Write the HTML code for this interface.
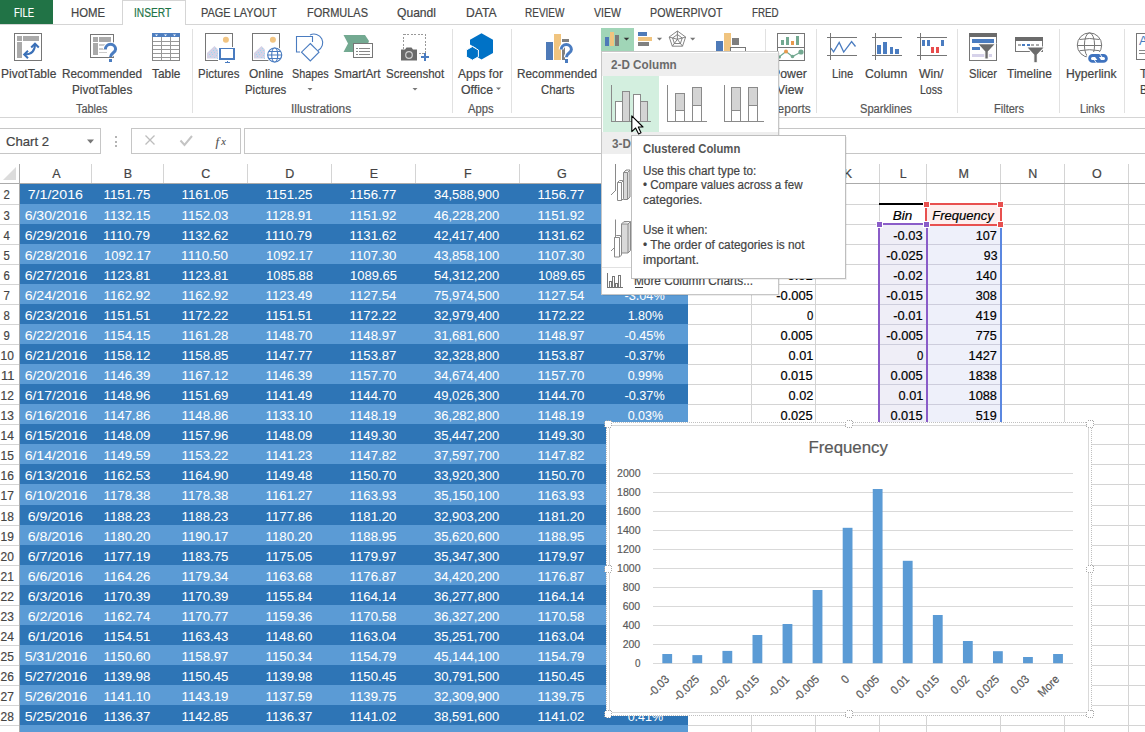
<!DOCTYPE html>
<html><head><meta charset="utf-8"><title>Excel</title>
<style>
html,body{margin:0;padding:0;background:#fff;}
body{width:1145px;height:732px;overflow:hidden;position:relative;font-family:"Liberation Sans", sans-serif;}
.t{position:absolute;white-space:pre;-webkit-text-stroke:0.2px currentColor;}
svg{overflow:visible}
</style></head><body>
<div style="position:absolute;left:0px;top:0px;width:53px;height:25px;background:#217346;"></div>
<div style="position:absolute;left:0px;top:24px;width:1145px;height:1px;background:#d5d5d5;"></div>
<div style="position:absolute;left:122px;top:0px;width:64px;height:25px;background:#ffffff;"></div>
<div style="position:absolute;left:122px;top:0px;width:1px;height:25px;background:#d5d5d5;"></div>
<div style="position:absolute;left:185px;top:0px;width:1px;height:25px;background:#d5d5d5;"></div>
<div style="position:absolute;left:122px;top:0px;width:64px;height:1px;background:#d5d5d5;"></div>
<div class="t" style="left:13.60px;top:6.00px;font-size:13px;line-height:13px;color:#ffffff;transform:scaleX(0.7317);transform-origin:left top;">FILE</div>
<div class="t" style="left:70.70px;top:6.00px;font-size:13px;line-height:13px;color:#444444;transform:scaleX(0.8744);transform-origin:left top;">HOME</div>
<div class="t" style="left:134.10px;top:6.00px;font-size:13px;line-height:13px;color:#217346;transform:scaleX(0.7821);transform-origin:left top;">INSERT</div>
<div class="t" style="left:201.40px;top:6.00px;font-size:13px;line-height:13px;color:#444444;transform:scaleX(0.8416);transform-origin:left top;">PAGE LAYOUT</div>
<div class="t" style="left:307.00px;top:6.00px;font-size:13px;line-height:13px;color:#444444;transform:scaleX(0.8445);transform-origin:left top;">FORMULAS</div>
<div class="t" style="left:397.00px;top:6.00px;font-size:13px;line-height:13px;color:#444444;transform:scaleX(0.9303);transform-origin:left top;">Quandl</div>
<div class="t" style="left:465.60px;top:6.00px;font-size:13px;line-height:13px;color:#444444;transform:scaleX(0.9313);transform-origin:left top;">DATA</div>
<div class="t" style="left:525.00px;top:6.00px;font-size:13px;line-height:13px;color:#444444;transform:scaleX(0.7700);transform-origin:left top;">REVIEW</div>
<div class="t" style="left:594.00px;top:6.00px;font-size:13px;line-height:13px;color:#444444;transform:scaleX(0.8124);transform-origin:left top;">VIEW</div>
<div class="t" style="left:650.00px;top:6.00px;font-size:13px;line-height:13px;color:#444444;transform:scaleX(0.8227);transform-origin:left top;">POWERPIVOT</div>
<div class="t" style="left:752.00px;top:6.00px;font-size:13px;line-height:13px;color:#444444;transform:scaleX(0.7516);transform-origin:left top;">FRED</div>
<div style="position:absolute;left:0px;top:117px;width:1145px;height:1px;background:#d5d5d5;"></div>
<div style="position:absolute;left:192px;top:29px;width:1px;height:84px;background:#e1e1e1;"></div>
<div style="position:absolute;left:452px;top:29px;width:1px;height:84px;background:#e1e1e1;"></div>
<div style="position:absolute;left:511px;top:29px;width:1px;height:84px;background:#e1e1e1;"></div>
<div style="position:absolute;left:765px;top:29px;width:1px;height:84px;background:#e1e1e1;"></div>
<div style="position:absolute;left:816px;top:29px;width:1px;height:84px;background:#e1e1e1;"></div>
<div style="position:absolute;left:957px;top:29px;width:1px;height:84px;background:#e1e1e1;"></div>
<div style="position:absolute;left:1059px;top:29px;width:1px;height:84px;background:#e1e1e1;"></div>
<div style="position:absolute;left:1124px;top:29px;width:1px;height:84px;background:#e1e1e1;"></div>
<div class="t" style="left:0.80px;top:66.70px;font-size:13px;line-height:13px;color:#444444;transform:scaleX(0.9219);transform-origin:left top;">PivotTable</div>
<div class="t" style="left:61.50px;top:66.70px;font-size:13px;line-height:13px;color:#444444;transform:scaleX(0.9075);transform-origin:left top;">Recommended</div>
<div class="t" style="left:71.60px;top:82.50px;font-size:13px;line-height:13px;color:#444444;transform:scaleX(0.9070);transform-origin:left top;">PivotTables</div>
<div class="t" style="left:151.60px;top:66.70px;font-size:13px;line-height:13px;color:#444444;transform:scaleX(0.9138);transform-origin:left top;">Table</div>
<div class="t" style="left:76.00px;top:102.94px;font-size:12px;line-height:12px;color:#555555;transform:scaleX(0.9052);transform-origin:left top;">Tables</div>
<div class="t" style="left:198.00px;top:66.70px;font-size:13px;line-height:13px;color:#444444;transform:scaleX(0.8836);transform-origin:left top;">Pictures</div>
<div class="t" style="left:249.40px;top:66.70px;font-size:13px;line-height:13px;color:#444444;transform:scaleX(0.9181);transform-origin:left top;">Online</div>
<div class="t" style="left:245.40px;top:82.50px;font-size:13px;line-height:13px;color:#444444;transform:scaleX(0.8793);transform-origin:left top;">Pictures</div>
<div class="t" style="left:292.00px;top:66.70px;font-size:13px;line-height:13px;color:#444444;transform:scaleX(0.8323);transform-origin:left top;">Shapes</div>
<div class="t" style="left:334.00px;top:66.70px;font-size:13px;line-height:13px;color:#444444;transform:scaleX(0.9084);transform-origin:left top;">SmartArt</div>
<div class="t" style="left:385.80px;top:66.70px;font-size:13px;line-height:13px;color:#444444;transform:scaleX(0.8850);transform-origin:left top;">Screenshot</div>
<div class="t" style="left:291.40px;top:102.94px;font-size:12px;line-height:12px;color:#555555;transform:scaleX(0.9917);transform-origin:left top;">Illustrations</div>
<div class="t" style="left:458.00px;top:66.70px;font-size:13px;line-height:13px;color:#444444;transform:scaleX(0.9273);transform-origin:left top;">Apps for</div>
<div class="t" style="left:461.30px;top:82.50px;font-size:13px;line-height:13px;color:#444444;transform:scaleX(0.9490);transform-origin:left top;">Office</div>
<div class="t" style="left:468.00px;top:102.94px;font-size:12px;line-height:12px;color:#555555;transform:scaleX(0.9357);transform-origin:left top;">Apps</div>
<div class="t" style="left:517.20px;top:66.70px;font-size:13px;line-height:13px;color:#444444;transform:scaleX(0.9075);transform-origin:left top;">Recommended</div>
<div class="t" style="left:541.30px;top:82.50px;font-size:13px;line-height:13px;color:#444444;transform:scaleX(0.8747);transform-origin:left top;">Charts</div>
<div class="t" style="left:772.00px;top:66.70px;font-size:13px;line-height:13px;color:#444444;transform:scaleX(0.9441);transform-origin:left top;">Power</div>
<div class="t" style="left:776.50px;top:82.50px;font-size:13px;line-height:13px;color:#444444;transform:scaleX(0.9409);transform-origin:left top;">View</div>
<div class="t" style="left:768.50px;top:102.94px;font-size:12px;line-height:12px;color:#555555;transform:scaleX(0.9945);transform-origin:left top;">Reports</div>
<div class="t" style="left:831.60px;top:66.70px;font-size:13px;line-height:13px;color:#444444;transform:scaleX(0.8666);transform-origin:left top;">Line</div>
<div class="t" style="left:865.30px;top:66.70px;font-size:13px;line-height:13px;color:#444444;transform:scaleX(0.9443);transform-origin:left top;">Column</div>
<div class="t" style="left:919.30px;top:66.70px;font-size:13px;line-height:13px;color:#444444;transform:scaleX(0.9423);transform-origin:left top;">Win/</div>
<div class="t" style="left:920.30px;top:82.50px;font-size:13px;line-height:13px;color:#444444;transform:scaleX(0.8082);transform-origin:left top;">Loss</div>
<div class="t" style="left:860.40px;top:102.94px;font-size:12px;line-height:12px;color:#555555;transform:scaleX(0.9263);transform-origin:left top;">Sparklines</div>
<div class="t" style="left:969.00px;top:66.70px;font-size:13px;line-height:13px;color:#444444;transform:scaleX(0.8611);transform-origin:left top;">Slicer</div>
<div class="t" style="left:1007.00px;top:66.70px;font-size:13px;line-height:13px;color:#444444;transform:scaleX(0.9228);transform-origin:left top;">Timeline</div>
<div class="t" style="left:993.60px;top:102.94px;font-size:12px;line-height:12px;color:#555555;transform:scaleX(0.9182);transform-origin:left top;">Filters</div>
<div class="t" style="left:1066.40px;top:66.70px;font-size:13px;line-height:13px;color:#444444;transform:scaleX(0.9338);transform-origin:left top;">Hyperlink</div>
<div class="t" style="left:1079.50px;top:102.94px;font-size:12px;line-height:12px;color:#555555;transform:scaleX(0.8852);transform-origin:left top;">Links</div>
<div class="t" style="left:1139.50px;top:66.70px;font-size:13px;line-height:13px;color:#444444;transform:scaleX(0.9430);transform-origin:left top;">T</div>
<div class="t" style="left:1139.50px;top:82.50px;font-size:13px;line-height:13px;color:#444444;transform:scaleX(0.8649);transform-origin:left top;">B</div>
<svg style="position:absolute;left:0px;top:0px;" width="1145" height="732" viewBox="0 0 1145 732" shape-rendering="crispEdges"><path d="M307.5 88.0h5.0l-2.5 2.5z" fill="#777" shape-rendering="geometricPrecision"/><path d="M412.5 88.0h5.0l-2.5 2.5z" fill="#777" shape-rendering="geometricPrecision"/><path d="M496.0 87.5h5.0l-2.5 2.5z" fill="#777" shape-rendering="geometricPrecision"/><rect x="14.5" y="33.5" width="27" height="27" fill="#fff" stroke="#767676" stroke-width="1.2"/><rect x="17" y="36" width="5" height="5" fill="#aaa"/><rect x="23" y="36" width="16" height="5" fill="#aaa"/><rect x="17" y="42" width="5" height="16" fill="#aaa"/><path d="M24.5 54.5 C31 54.5 35 51 35 44" fill="none" stroke="#3a70b8" stroke-width="2" shape-rendering="geometricPrecision"/><path d="M28 50.8 L24.2 54.5 L28 58.2 M31.2 47.5 L35 43.7 L38.8 47.5" fill="none" stroke="#3a70b8" stroke-width="2" shape-rendering="geometricPrecision"/><rect x="90.5" y="34.5" width="23" height="23" fill="#fff" stroke="#767676"/><rect x="93" y="37" width="4.5" height="4.5" fill="#aaa"/><rect x="99" y="37" width="12" height="4.5" fill="#aaa"/><rect x="93" y="43" width="4.5" height="12" fill="#aaa"/><rect x="99" y="44" width="8" height="1.5" fill="#ccc"/><rect x="99" y="48" width="8" height="1.5" fill="#ccc"/><rect x="99" y="51.5" width="8" height="1.5" fill="#ccc"/><path d="M105.4 49.3 A5.1 5.1 0 0 1 115.6 49.3 C115.6 52.8 110.6 52.8 110.6 57" fill="none" stroke="#fff" stroke-width="5" shape-rendering="geometricPrecision"/><path d="M105.4 49.3 A5.1 5.1 0 0 1 115.6 49.3 C115.6 52.8 110.6 52.8 110.6 57" fill="none" stroke="#4a7cc0" stroke-width="3" shape-rendering="geometricPrecision"/><rect x="109.1" y="59" width="3" height="3.3" fill="#4a7cc0"/><rect x="152.5" y="33.5" width="27" height="27" fill="#fff" stroke="#888"/><rect x="152" y="33" width="28" height="4" fill="#4f7fc0"/><rect x="153" y="40.5" width="26" height="1" fill="#999"/><rect x="153" y="44.5" width="26" height="1" fill="#999"/><rect x="153" y="48.5" width="26" height="1" fill="#999"/><rect x="153" y="52.5" width="26" height="1" fill="#999"/><rect x="153" y="56.5" width="26" height="1" fill="#999"/><rect x="161" y="37" width="1" height="23" fill="#999"/><rect x="170" y="37" width="1" height="23" fill="#999"/><path d="M155.0 34.5h3l-1.5 1.8z" fill="#fff" shape-rendering="geometricPrecision"/><path d="M164.0 34.5h3l-1.5 1.8z" fill="#fff" shape-rendering="geometricPrecision"/><path d="M173.0 34.5h3l-1.5 1.8z" fill="#fff" shape-rendering="geometricPrecision"/><rect x="205.5" y="33.5" width="27" height="27" fill="#fff" stroke="#767676"/><circle cx="225.9" cy="39.8" r="3" fill="#f1c482" shape-rendering="geometricPrecision"/><path d="M207 58.5 V53 L214.5 46 L218 49.5 V58.5 z" fill="#d5d2e6" shape-rendering="geometricPrecision"/><rect x="214.5" y="48" width="1" height="1" fill="#9fd9f0"/><rect x="212.5" y="50" width="1" height="1" fill="#9fd9f0"/><rect x="216" y="50" width="1" height="1" fill="#9fd9f0"/><rect x="210.5" y="52" width="1" height="1" fill="#9fd9f0"/><rect x="214" y="52" width="1" height="1" fill="#9fd9f0"/><rect x="217" y="53" width="1" height="1" fill="#9fd9f0"/><rect x="208.5" y="54" width="1" height="1" fill="#9fd9f0"/><rect x="212" y="54" width="1" height="1" fill="#9fd9f0"/><rect x="215.5" y="55" width="1" height="1" fill="#9fd9f0"/><rect x="210" y="56" width="1" height="1" fill="#9fd9f0"/><rect x="213.5" y="57" width="1" height="1" fill="#9fd9f0"/><rect x="217" y="57.5" width="1" height="1" fill="#9fd9f0"/><rect x="218" y="46.5" width="18" height="14.5" fill="#fff"/><rect x="220" y="48.5" width="14" height="10.5" fill="#fff" stroke="#4a7cc0" stroke-width="1.8"/><rect x="224.5" y="61.8" width="5.5" height="1.2" fill="#4a7cc0"/><rect x="226.5" y="61" width="1.5" height="1" fill="#4a7cc0"/><rect x="252.5" y="33.5" width="27" height="27" fill="#fff" stroke="#767676"/><circle cx="272.9" cy="39.8" r="3" fill="#f1c482" shape-rendering="geometricPrecision"/><path d="M254 58.5 V53 L261.5 46 L265 49.5 V58.5 z" fill="#d5d2e6" shape-rendering="geometricPrecision"/><rect x="261.5" y="48" width="1" height="1" fill="#9fd9f0"/><rect x="259.5" y="50" width="1" height="1" fill="#9fd9f0"/><rect x="263" y="50" width="1" height="1" fill="#9fd9f0"/><rect x="257.5" y="52" width="1" height="1" fill="#9fd9f0"/><rect x="261" y="52" width="1" height="1" fill="#9fd9f0"/><rect x="264" y="53" width="1" height="1" fill="#9fd9f0"/><rect x="255.5" y="54" width="1" height="1" fill="#9fd9f0"/><rect x="259" y="54" width="1" height="1" fill="#9fd9f0"/><rect x="262.5" y="55" width="1" height="1" fill="#9fd9f0"/><rect x="257" y="56" width="1" height="1" fill="#9fd9f0"/><rect x="260.5" y="57" width="1" height="1" fill="#9fd9f0"/><rect x="264" y="57.5" width="1" height="1" fill="#9fd9f0"/><circle cx="274.7" cy="55" r="8.5" fill="#fff" shape-rendering="geometricPrecision"/><g fill="#fff" stroke="#4a7cc0" stroke-width="1.2" shape-rendering="geometricPrecision"><circle cx="274.7" cy="55" r="7"/><ellipse cx="274.7" cy="55" rx="3" ry="7"/><path d="M267.7 55h14M268.7 51.5h12M268.7 58.5h12"/></g><g fill="none" stroke="#4a7cc0" stroke-width="1.1" shape-rendering="geometricPrecision"><path d="M300 52 H296.5 V36.5 H312.5 V42"/><path d="M318 50.5 A8.5 8.5 0 1 0 310 35"/><path d="M310.3 43.5 L319 52.2 L310.3 61 L301.5 52.2 z"/></g><path d="M343.5 35 H365 L369 41 L365 52 H343.5 L348 43.5 z" fill="#73a991" shape-rendering="geometricPrecision"/><rect x="353.5" y="43.5" width="19" height="14" fill="#fff" stroke="#767676"/><rect x="356" y="47.5" width="1.5" height="1" fill="#888"/><rect x="359" y="47.5" width="11" height="1" fill="#888"/><rect x="356" y="50.5" width="1.5" height="1" fill="#888"/><rect x="359" y="50.5" width="11" height="1" fill="#888"/><rect x="356" y="53.5" width="1.5" height="1" fill="#888"/><rect x="359" y="53.5" width="11" height="1" fill="#888"/><rect x="403.5" y="34.5" width="22" height="18.5" fill="none" stroke="#999" stroke-dasharray="2 1.5"/><path d="M401 49.5 h4 l1.5 -2 h5 l1.5 2 h4 v11 h-16 z" fill="#6a6a6a" shape-rendering="geometricPrecision"/><circle cx="409" cy="55" r="3.3" fill="#6a6a6a" stroke="#d0d0d0" stroke-width="1.2" shape-rendering="geometricPrecision"/><rect x="421" y="55.8" width="8" height="2" fill="#4a7cc0"/><rect x="424" y="52.8" width="2" height="8" fill="#4a7cc0"/><path d="M481.5 33.2 L493 39.8 V53 L481.5 59.5 L476 56.3 V48 L470 44.5 V39.8 z" fill="#0072c6" shape-rendering="geometricPrecision"/><path d="M472.4 46.5 L478.4 50 V56.8 L472.4 60.2 L466.4 56.8 V50 z" fill="#0072c6" stroke="#fff" stroke-width="1" shape-rendering="geometricPrecision"/><rect x="546" y="42" width="7" height="17.5" fill="#4e7ab8"/><rect x="554" y="34.3" width="7" height="25.2" fill="#f0c47f"/><rect x="562.2" y="39" width="7" height="3" fill="#7f7f7f"/><rect x="562.2" y="47" width="3" height="12.5" fill="#7f7f7f"/><path d="M561.2 49.6 A5.1 5.1 0 0 1 571.4 49.6 C571.4 53.1 566.4 53.1 566.4 57.3" fill="none" stroke="#fff" stroke-width="5" shape-rendering="geometricPrecision"/><path d="M561.2 49.6 A5.1 5.1 0 0 1 571.4 49.6 C571.4 53.1 566.4 53.1 566.4 57.3" fill="none" stroke="#4a7cc0" stroke-width="3" shape-rendering="geometricPrecision"/><rect x="564.9" y="59.3" width="3" height="3.3" fill="#4a7cc0"/><rect x="601" y="28" width="33" height="23" fill="#a0d5b7"/><rect x="605" y="37" width="3.7" height="8.6" fill="#4e7ab8"/><rect x="610.2" y="32" width="3.7" height="13.6" fill="#f0c47f"/><rect x="615" y="35.2" width="3.7" height="10.4" fill="#7a7a7a"/><path d="M623.7 37.8h5.6l-2.8 2.8z" fill="#333" shape-rendering="geometricPrecision"/><rect x="638" y="32.2" width="8.7" height="3.5" fill="#4e7ab8"/><rect x="638" y="37.1" width="13.7" height="3.7" fill="#f0c47f"/><rect x="638" y="42" width="10.8" height="3.6" fill="#808080"/><path d="M656.9 37.8h5.2l-2.6 2.6z" fill="#777" shape-rendering="geometricPrecision"/><g fill="none" stroke="#777" stroke-width="0.9" shape-rendering="geometricPrecision"><path d="M677.4 31 L685.6 37 L682.5 46.2 H672.3 L669.2 37 z"/><path d="M677.4 34.5 L682.2 38 L680.4 43.5 H674.4 L672.6 38 z"/><path d="M677.4 31 V39.3 M685.6 37 L677.4 39.3 M682.5 46.2 L677.4 39.3 M672.3 46.2 L677.4 39.3 M669.2 37 L677.4 39.3"/></g><path d="M690.1 37.8h5.2l-2.6 2.6z" fill="#777" shape-rendering="geometricPrecision"/><rect x="716" y="40.8" width="6.7" height="12" fill="#4e7ab8"/><rect x="724.2" y="33" width="6.5" height="20" fill="#f0c47f"/><rect x="732" y="38.2" width="6.8" height="7" fill="#7f7f7f"/><rect x="730.5" y="47.5" width="15" height="8" fill="#fff" stroke="#767676"/><rect x="777.5" y="33.5" width="27" height="27" fill="#fff" stroke="#767676"/><rect x="778" y="47.3" width="26" height="1" fill="#767676"/><rect x="780.5" y="40" width="3.3" height="5" fill="#73a991"/><rect x="785.5" y="37" width="3.3" height="8" fill="#73a991"/><rect x="790.5" y="40.5" width="3.3" height="4.5" fill="#e8994d"/><rect x="795.5" y="35.8" width="3.3" height="9.2" fill="#73a991"/><path d="M779 57 L786 51.5 L792.5 56.5 L801 52" fill="none" stroke="#73a991" stroke-width="1.2" shape-rendering="geometricPrecision"/><g shape-rendering="geometricPrecision"><circle cx="786" cy="51.5" r="2" fill="#e8994d"/><circle cx="792.5" cy="56.5" r="1.8" fill="#73a991"/><circle cx="801" cy="52" r="2.6" fill="#73a991"/><circle cx="779.5" cy="57" r="1.5" fill="#73a991"/></g><rect x="830" y="33" width="1" height="26.5" fill="#767676"/><rect x="827" y="37" width="30" height="1" fill="#767676"/><rect x="827" y="55" width="30" height="1" fill="#767676"/><path d="M830.9 48.2 L833.6 51.9 L839.2 42.5 L843.7 52.1 L851.6 41.5 L855.5 46.5" fill="none" stroke="#4a7cc0" stroke-width="1.3" shape-rendering="geometricPrecision"/><rect x="875" y="33" width="1" height="26.5" fill="#767676"/><rect x="872" y="37" width="30" height="1" fill="#767676"/><rect x="872" y="55" width="30" height="1" fill="#767676"/><rect x="877" y="45" width="3.8" height="8.5" fill="#4a7cc0"/><rect x="883.3" y="42.2" width="3.8" height="11.3" fill="#4a7cc0"/><rect x="889.5" y="47.2" width="3.6" height="6.3" fill="#4a7cc0"/><rect x="895.4" y="49.2" width="3.6" height="4.3" fill="#4a7cc0"/><rect x="920" y="33" width="1" height="26.5" fill="#767676"/><rect x="917" y="37" width="30" height="1" fill="#767676"/><rect x="917" y="55" width="30" height="1" fill="#767676"/><rect x="922.2" y="39.8" width="2.6" height="5.8" fill="#4a7cc0"/><rect x="927.2" y="39.8" width="2.6" height="5.8" fill="#4a7cc0"/><rect x="931.1" y="46.9" width="2.8" height="5.9" fill="#e84c4c"/><rect x="936" y="46.9" width="2.6" height="5.9" fill="#e84c4c"/><rect x="941.3" y="39.8" width="2.7" height="5.8" fill="#4a7cc0"/><rect x="969.5" y="33.5" width="27" height="27" fill="#fff" stroke="#767676"/><rect x="969" y="33" width="28" height="3.6" fill="#6b6b6b"/><rect x="972" y="39.3" width="22" height="3.2" fill="#4a7cc0"/><rect x="972" y="46.5" width="8" height="3.2" fill="#4a7cc0"/><rect x="972" y="54" width="20" height="3" fill="#d6d2ea"/><path d="M977.5 43.8 H995.6 L988.3 51.8 V59 H984.8 V51.8 z" fill="#6b6b6b" stroke="#fff" stroke-width="1.1" shape-rendering="geometricPrecision"/><rect x="1015.5" y="37.5" width="27" height="14" fill="#fff" stroke="#767676"/><rect x="1015" y="37" width="28" height="3.5" fill="#6b6b6b"/><rect x="1017.5" y="43.5" width="3" height="2" fill="#aaa"/><rect x="1022" y="43.5" width="3" height="2" fill="#4a7cc0"/><rect x="1026.5" y="43.5" width="3" height="2" fill="#4a7cc0"/><rect x="1031" y="43.5" width="3" height="2" fill="#aaa"/><rect x="1035.5" y="43.5" width="3" height="2" fill="#aaa"/><path d="M1026.5 47 H1044.6 L1037.3 55 V62.8 H1033.8 V55 z" fill="#6b6b6b" stroke="#fff" stroke-width="1.1" shape-rendering="geometricPrecision"/><g fill="none" stroke="#767676" stroke-width="1" shape-rendering="geometricPrecision"><circle cx="1089.5" cy="45.1" r="12.2"/><ellipse cx="1089.5" cy="45.1" rx="5.1" ry="12.2"/><path d="M1077.3 45.5 H1101.7 M1079.5 39.5 Q1089.5 37.5 1099.5 39.5 M1079.5 50.7 Q1089.5 48.7 1099.5 50.7"/></g><rect x="1086.5" y="52" width="23" height="12.5" rx="6" fill="#fff" shape-rendering="geometricPrecision"/><g fill="none" stroke="#3f73bf" shape-rendering="geometricPrecision"><rect x="1089.6" y="55.5" width="16.8" height="5.9" rx="2.95" stroke-width="2.8"/><path d="M1096.3 56 L1099.7 60.7" stroke-width="3"/></g><g stroke="#fff" stroke-width="0.9" shape-rendering="geometricPrecision"><path d="M1099.4 53.3 L1102.4 57.6"/><path d="M1093.8 59.2 L1096.8 63.4"/></g><rect x="1136.5" y="33.5" width="20" height="26" fill="#fff" stroke="#767676"/><text x="1139" y="45" font-family="Liberation Sans" font-size="13" fill="#4a7cc0">A</text><rect x="1139" y="50" width="10" height="1" fill="#888"/><rect x="1139" y="53" width="10" height="1" fill="#888"/></svg>
<div style="position:absolute;left:-1px;top:128px;width:100px;height:24px;border:1px solid #c6c6c6;background:#fff"></div>
<div class="t" style="left:6.00px;top:135.00px;font-size:13px;line-height:13px;color:#444444;transform:scaleX(1.0084);transform-origin:left top;">Chart 2</div>
<svg style="position:absolute;left:0px;top:0px;" width="1145" height="732" viewBox="0 0 1145 732" shape-rendering="crispEdges"><path d="M87 139.5h7l-3.5 4z" fill="#777" shape-rendering="geometricPrecision"/><rect x="115" y="136" width="2" height="2" fill="#b4b4b4"/><rect x="115" y="140.5" width="2" height="2" fill="#b4b4b4"/><rect x="115" y="145" width="2" height="2" fill="#b4b4b4"/></svg>
<div style="position:absolute;left:131px;top:128px;width:108px;height:24px;border:1px solid #c6c6c6;background:#fff"></div>
<div style="position:absolute;left:244px;top:128px;width:920px;height:24px;border:1px solid #c6c6c6;background:#fff"></div>
<svg style="position:absolute;left:0px;top:0px;" width="1145" height="732" viewBox="0 0 1145 732" shape-rendering="crispEdges"><path d="M145.5 135.5 L154.5 144.5 M154.5 135.5 L145.5 144.5" stroke="#bdbdbd" stroke-width="1.3" fill="none" shape-rendering="geometricPrecision"/><path d="M180.5 140.5 L184.5 145 L192 136" stroke="#c4c4c4" stroke-width="2" fill="none" shape-rendering="geometricPrecision"/></svg>
<div class="t" style="left:215.50px;top:134.50px;font-size:13px;font-style:italic;line-height:13px;color:#505050;font-family:'Liberation Serif',serif;-webkit-text-stroke:0.1px #505050;">f</div>
<div class="t" style="left:221.20px;top:136.91px;font-size:10.5px;font-style:italic;line-height:10.5px;color:#505050;font-family:'Liberation Serif',serif;-webkit-text-stroke:0.1px #505050;">x</div>
<div style="position:absolute;left:91px;top:164px;width:1px;height:19px;background:#d4d4d4;"></div>
<div style="position:absolute;left:163px;top:164px;width:1px;height:19px;background:#d4d4d4;"></div>
<div style="position:absolute;left:247px;top:164px;width:1px;height:19px;background:#d4d4d4;"></div>
<div style="position:absolute;left:331px;top:164px;width:1px;height:19px;background:#d4d4d4;"></div>
<div style="position:absolute;left:415px;top:164px;width:1px;height:19px;background:#d4d4d4;"></div>
<div style="position:absolute;left:519px;top:164px;width:1px;height:19px;background:#d4d4d4;"></div>
<div style="position:absolute;left:603px;top:164px;width:1px;height:19px;background:#d4d4d4;"></div>
<div style="position:absolute;left:687px;top:164px;width:1px;height:19px;background:#d4d4d4;"></div>
<div style="position:absolute;left:751px;top:164px;width:1px;height:19px;background:#d4d4d4;"></div>
<div style="position:absolute;left:815px;top:164px;width:1px;height:19px;background:#d4d4d4;"></div>
<div style="position:absolute;left:879px;top:164px;width:1px;height:19px;background:#d4d4d4;"></div>
<div style="position:absolute;left:926px;top:164px;width:1px;height:19px;background:#d4d4d4;"></div>
<div style="position:absolute;left:1000px;top:164px;width:1px;height:19px;background:#d4d4d4;"></div>
<div style="position:absolute;left:1064px;top:164px;width:1px;height:19px;background:#d4d4d4;"></div>
<div style="position:absolute;left:1128px;top:164px;width:1px;height:19px;background:#d4d4d4;"></div>
<div style="position:absolute;left:0px;top:183px;width:1145px;height:1px;background:#ababab;"></div>
<div style="position:absolute;left:19px;top:164px;width:1px;height:568px;background:#ababab;"></div>
<svg style="position:absolute;left:0px;top:0px;" width="1145" height="732" viewBox="0 0 1145 732" shape-rendering="crispEdges"><path d="M16 167 V180 H3 z" fill="#dcdcdc" shape-rendering="geometricPrecision"/></svg>
<div class="t" style="left:52.13px;top:168.42px;font-size:12.5px;line-height:12.5px;color:#444444;">A</div>
<div class="t" style="left:123.63px;top:168.42px;font-size:12.5px;line-height:12.5px;color:#444444;">B</div>
<div class="t" style="left:201.28px;top:168.42px;font-size:12.5px;line-height:12.5px;color:#444444;">C</div>
<div class="t" style="left:285.28px;top:168.42px;font-size:12.5px;line-height:12.5px;color:#444444;">D</div>
<div class="t" style="left:369.63px;top:168.42px;font-size:12.5px;line-height:12.5px;color:#444444;">E</div>
<div class="t" style="left:463.98px;top:168.42px;font-size:12.5px;line-height:12.5px;color:#444444;">F</div>
<div class="t" style="left:556.93px;top:168.42px;font-size:12.5px;line-height:12.5px;color:#444444;">G</div>
<div class="t" style="left:843.63px;top:168.42px;font-size:12.5px;line-height:12.5px;color:#444444;">K</div>
<div class="t" style="left:899.82px;top:168.42px;font-size:12.5px;line-height:12.5px;color:#444444;">L</div>
<div class="t" style="left:958.59px;top:168.42px;font-size:12.5px;line-height:12.5px;color:#444444;">M</div>
<div class="t" style="left:1028.28px;top:168.42px;font-size:12.5px;line-height:12.5px;color:#444444;">N</div>
<div class="t" style="left:1091.93px;top:168.42px;font-size:12.5px;line-height:12.5px;color:#444444;">O</div>
<div class="t" style="left:1160.63px;top:168.42px;font-size:12.5px;line-height:12.5px;color:#444444;">P</div>
<div style="position:absolute;left:0px;top:204px;width:19px;height:1px;background:#d4d4d4;"></div>
<div style="position:absolute;left:0px;top:224px;width:19px;height:1px;background:#d4d4d4;"></div>
<div style="position:absolute;left:0px;top:244px;width:19px;height:1px;background:#d4d4d4;"></div>
<div style="position:absolute;left:0px;top:264px;width:19px;height:1px;background:#d4d4d4;"></div>
<div style="position:absolute;left:0px;top:284px;width:19px;height:1px;background:#d4d4d4;"></div>
<div style="position:absolute;left:0px;top:304px;width:19px;height:1px;background:#d4d4d4;"></div>
<div style="position:absolute;left:0px;top:324px;width:19px;height:1px;background:#d4d4d4;"></div>
<div style="position:absolute;left:0px;top:344px;width:19px;height:1px;background:#d4d4d4;"></div>
<div style="position:absolute;left:0px;top:364px;width:19px;height:1px;background:#d4d4d4;"></div>
<div style="position:absolute;left:0px;top:384px;width:19px;height:1px;background:#d4d4d4;"></div>
<div style="position:absolute;left:0px;top:404px;width:19px;height:1px;background:#d4d4d4;"></div>
<div style="position:absolute;left:0px;top:424px;width:19px;height:1px;background:#d4d4d4;"></div>
<div style="position:absolute;left:0px;top:444px;width:19px;height:1px;background:#d4d4d4;"></div>
<div style="position:absolute;left:0px;top:464px;width:19px;height:1px;background:#d4d4d4;"></div>
<div style="position:absolute;left:0px;top:484px;width:19px;height:1px;background:#d4d4d4;"></div>
<div style="position:absolute;left:0px;top:505px;width:19px;height:1px;background:#d4d4d4;"></div>
<div style="position:absolute;left:0px;top:525px;width:19px;height:1px;background:#d4d4d4;"></div>
<div style="position:absolute;left:0px;top:545px;width:19px;height:1px;background:#d4d4d4;"></div>
<div style="position:absolute;left:0px;top:565px;width:19px;height:1px;background:#d4d4d4;"></div>
<div style="position:absolute;left:0px;top:585px;width:19px;height:1px;background:#d4d4d4;"></div>
<div style="position:absolute;left:0px;top:605px;width:19px;height:1px;background:#d4d4d4;"></div>
<div style="position:absolute;left:0px;top:625px;width:19px;height:1px;background:#d4d4d4;"></div>
<div style="position:absolute;left:0px;top:645px;width:19px;height:1px;background:#d4d4d4;"></div>
<div style="position:absolute;left:0px;top:665px;width:19px;height:1px;background:#d4d4d4;"></div>
<div style="position:absolute;left:0px;top:685px;width:19px;height:1px;background:#d4d4d4;"></div>
<div style="position:absolute;left:0px;top:705px;width:19px;height:1px;background:#d4d4d4;"></div>
<div style="position:absolute;left:0px;top:725px;width:19px;height:1px;background:#d4d4d4;"></div>
<div class="t" style="left:2.78px;top:188.00px;font-size:13px;line-height:13px;color:#444444;transform:scaleX(0.8708);transform-origin:center top;">2</div>
<div class="t" style="left:2.78px;top:208.90px;font-size:13px;line-height:13px;color:#444444;transform:scaleX(0.8708);transform-origin:center top;">3</div>
<div class="t" style="left:2.78px;top:228.90px;font-size:13px;line-height:13px;color:#444444;transform:scaleX(0.8708);transform-origin:center top;">4</div>
<div class="t" style="left:2.78px;top:248.90px;font-size:13px;line-height:13px;color:#444444;transform:scaleX(0.8708);transform-origin:center top;">5</div>
<div class="t" style="left:2.78px;top:268.90px;font-size:13px;line-height:13px;color:#444444;transform:scaleX(0.8708);transform-origin:center top;">6</div>
<div class="t" style="left:2.78px;top:288.90px;font-size:13px;line-height:13px;color:#444444;transform:scaleX(0.8708);transform-origin:center top;">7</div>
<div class="t" style="left:2.78px;top:308.90px;font-size:13px;line-height:13px;color:#444444;transform:scaleX(0.8708);transform-origin:center top;">8</div>
<div class="t" style="left:2.78px;top:328.90px;font-size:13px;line-height:13px;color:#444444;transform:scaleX(0.8708);transform-origin:center top;">9</div>
<div class="t" style="left:0.07px;top:348.90px;font-size:13px;line-height:13px;color:#444444;transform:scaleX(0.9192);transform-origin:center top;">10</div>
<div class="t" style="left:0.55px;top:368.90px;font-size:13px;line-height:13px;color:#444444;transform:scaleX(0.9852);transform-origin:center top;">11</div>
<div class="t" style="left:0.07px;top:388.90px;font-size:13px;line-height:13px;color:#444444;transform:scaleX(0.9192);transform-origin:center top;">12</div>
<div class="t" style="left:0.07px;top:408.90px;font-size:13px;line-height:13px;color:#444444;transform:scaleX(0.9192);transform-origin:center top;">13</div>
<div class="t" style="left:0.07px;top:428.90px;font-size:13px;line-height:13px;color:#444444;transform:scaleX(0.9192);transform-origin:center top;">14</div>
<div class="t" style="left:0.07px;top:448.90px;font-size:13px;line-height:13px;color:#444444;transform:scaleX(0.9192);transform-origin:center top;">15</div>
<div class="t" style="left:0.07px;top:468.90px;font-size:13px;line-height:13px;color:#444444;transform:scaleX(0.9192);transform-origin:center top;">16</div>
<div class="t" style="left:0.07px;top:488.90px;font-size:13px;line-height:13px;color:#444444;transform:scaleX(0.9192);transform-origin:center top;">17</div>
<div class="t" style="left:0.07px;top:509.90px;font-size:13px;line-height:13px;color:#444444;transform:scaleX(0.9192);transform-origin:center top;">18</div>
<div class="t" style="left:0.07px;top:529.90px;font-size:13px;line-height:13px;color:#444444;transform:scaleX(0.9192);transform-origin:center top;">19</div>
<div class="t" style="left:0.07px;top:549.90px;font-size:13px;line-height:13px;color:#444444;transform:scaleX(0.9192);transform-origin:center top;">20</div>
<div class="t" style="left:0.07px;top:569.90px;font-size:13px;line-height:13px;color:#444444;transform:scaleX(0.9192);transform-origin:center top;">21</div>
<div class="t" style="left:0.07px;top:589.90px;font-size:13px;line-height:13px;color:#444444;transform:scaleX(0.9192);transform-origin:center top;">22</div>
<div class="t" style="left:0.07px;top:609.90px;font-size:13px;line-height:13px;color:#444444;transform:scaleX(0.9192);transform-origin:center top;">23</div>
<div class="t" style="left:0.07px;top:629.90px;font-size:13px;line-height:13px;color:#444444;transform:scaleX(0.9192);transform-origin:center top;">24</div>
<div class="t" style="left:0.07px;top:649.90px;font-size:13px;line-height:13px;color:#444444;transform:scaleX(0.9192);transform-origin:center top;">25</div>
<div class="t" style="left:0.07px;top:669.90px;font-size:13px;line-height:13px;color:#444444;transform:scaleX(0.9192);transform-origin:center top;">26</div>
<div class="t" style="left:0.07px;top:689.90px;font-size:13px;line-height:13px;color:#444444;transform:scaleX(0.9192);transform-origin:center top;">27</div>
<div class="t" style="left:0.07px;top:709.90px;font-size:13px;line-height:13px;color:#444444;transform:scaleX(0.9192);transform-origin:center top;">28</div>
<div style="position:absolute;left:687px;top:184px;width:1px;height:548px;background:#d4d4d4;"></div>
<div style="position:absolute;left:751px;top:184px;width:1px;height:548px;background:#d4d4d4;"></div>
<div style="position:absolute;left:815px;top:184px;width:1px;height:548px;background:#d4d4d4;"></div>
<div style="position:absolute;left:879px;top:184px;width:1px;height:548px;background:#d4d4d4;"></div>
<div style="position:absolute;left:926px;top:184px;width:1px;height:548px;background:#d4d4d4;"></div>
<div style="position:absolute;left:1000px;top:184px;width:1px;height:548px;background:#d4d4d4;"></div>
<div style="position:absolute;left:1064px;top:184px;width:1px;height:548px;background:#d4d4d4;"></div>
<div style="position:absolute;left:1128px;top:184px;width:1px;height:548px;background:#d4d4d4;"></div>
<div style="position:absolute;left:688px;top:204px;width:460px;height:1px;background:#d4d4d4;"></div>
<div style="position:absolute;left:688px;top:224px;width:460px;height:1px;background:#d4d4d4;"></div>
<div style="position:absolute;left:688px;top:244px;width:460px;height:1px;background:#d4d4d4;"></div>
<div style="position:absolute;left:688px;top:264px;width:460px;height:1px;background:#d4d4d4;"></div>
<div style="position:absolute;left:688px;top:284px;width:460px;height:1px;background:#d4d4d4;"></div>
<div style="position:absolute;left:688px;top:304px;width:460px;height:1px;background:#d4d4d4;"></div>
<div style="position:absolute;left:688px;top:324px;width:460px;height:1px;background:#d4d4d4;"></div>
<div style="position:absolute;left:688px;top:344px;width:460px;height:1px;background:#d4d4d4;"></div>
<div style="position:absolute;left:688px;top:364px;width:460px;height:1px;background:#d4d4d4;"></div>
<div style="position:absolute;left:688px;top:384px;width:460px;height:1px;background:#d4d4d4;"></div>
<div style="position:absolute;left:688px;top:404px;width:460px;height:1px;background:#d4d4d4;"></div>
<div style="position:absolute;left:688px;top:424px;width:460px;height:1px;background:#d4d4d4;"></div>
<div style="position:absolute;left:688px;top:444px;width:460px;height:1px;background:#d4d4d4;"></div>
<div style="position:absolute;left:688px;top:464px;width:460px;height:1px;background:#d4d4d4;"></div>
<div style="position:absolute;left:688px;top:484px;width:460px;height:1px;background:#d4d4d4;"></div>
<div style="position:absolute;left:688px;top:505px;width:460px;height:1px;background:#d4d4d4;"></div>
<div style="position:absolute;left:688px;top:525px;width:460px;height:1px;background:#d4d4d4;"></div>
<div style="position:absolute;left:688px;top:545px;width:460px;height:1px;background:#d4d4d4;"></div>
<div style="position:absolute;left:688px;top:565px;width:460px;height:1px;background:#d4d4d4;"></div>
<div style="position:absolute;left:688px;top:585px;width:460px;height:1px;background:#d4d4d4;"></div>
<div style="position:absolute;left:688px;top:605px;width:460px;height:1px;background:#d4d4d4;"></div>
<div style="position:absolute;left:688px;top:625px;width:460px;height:1px;background:#d4d4d4;"></div>
<div style="position:absolute;left:688px;top:645px;width:460px;height:1px;background:#d4d4d4;"></div>
<div style="position:absolute;left:688px;top:665px;width:460px;height:1px;background:#d4d4d4;"></div>
<div style="position:absolute;left:688px;top:685px;width:460px;height:1px;background:#d4d4d4;"></div>
<div style="position:absolute;left:688px;top:705px;width:460px;height:1px;background:#d4d4d4;"></div>
<div style="position:absolute;left:688px;top:725px;width:460px;height:1px;background:#d4d4d4;"></div>
<div style="position:absolute;left:20px;top:184px;width:668px;height:20px;background:#2e75b6;"></div>
<div style="position:absolute;left:20px;top:204px;width:668px;height:20px;background:#5b9bd5;"></div>
<div style="position:absolute;left:20px;top:224px;width:668px;height:20px;background:#2e75b6;"></div>
<div style="position:absolute;left:20px;top:244px;width:668px;height:20px;background:#5b9bd5;"></div>
<div style="position:absolute;left:20px;top:264px;width:668px;height:20px;background:#2e75b6;"></div>
<div style="position:absolute;left:20px;top:284px;width:668px;height:20px;background:#5b9bd5;"></div>
<div style="position:absolute;left:20px;top:304px;width:668px;height:20px;background:#2e75b6;"></div>
<div style="position:absolute;left:20px;top:324px;width:668px;height:20px;background:#5b9bd5;"></div>
<div style="position:absolute;left:20px;top:344px;width:668px;height:20px;background:#2e75b6;"></div>
<div style="position:absolute;left:20px;top:364px;width:668px;height:20px;background:#5b9bd5;"></div>
<div style="position:absolute;left:20px;top:384px;width:668px;height:20px;background:#2e75b6;"></div>
<div style="position:absolute;left:20px;top:404px;width:668px;height:20px;background:#5b9bd5;"></div>
<div style="position:absolute;left:20px;top:424px;width:668px;height:20px;background:#2e75b6;"></div>
<div style="position:absolute;left:20px;top:444px;width:668px;height:20px;background:#5b9bd5;"></div>
<div style="position:absolute;left:20px;top:464px;width:668px;height:20px;background:#2e75b6;"></div>
<div style="position:absolute;left:20px;top:484px;width:668px;height:21px;background:#5b9bd5;"></div>
<div style="position:absolute;left:20px;top:505px;width:668px;height:20px;background:#2e75b6;"></div>
<div style="position:absolute;left:20px;top:525px;width:668px;height:20px;background:#5b9bd5;"></div>
<div style="position:absolute;left:20px;top:545px;width:668px;height:20px;background:#2e75b6;"></div>
<div style="position:absolute;left:20px;top:565px;width:668px;height:20px;background:#5b9bd5;"></div>
<div style="position:absolute;left:20px;top:585px;width:668px;height:20px;background:#2e75b6;"></div>
<div style="position:absolute;left:20px;top:605px;width:668px;height:20px;background:#5b9bd5;"></div>
<div style="position:absolute;left:20px;top:625px;width:668px;height:20px;background:#2e75b6;"></div>
<div style="position:absolute;left:20px;top:645px;width:668px;height:20px;background:#5b9bd5;"></div>
<div style="position:absolute;left:20px;top:665px;width:668px;height:20px;background:#2e75b6;"></div>
<div style="position:absolute;left:20px;top:685px;width:668px;height:20px;background:#5b9bd5;"></div>
<div style="position:absolute;left:20px;top:705px;width:668px;height:20px;background:#2e75b6;"></div>
<div style="position:absolute;left:20px;top:725px;width:668px;height:20px;background:#5b9bd5;"></div>
<div class="t" style="left:30.20px;top:188.10px;font-size:13px;line-height:13px;color:#ffffff;transform:scaleX(1.0913);transform-origin:center top;-webkit-text-stroke:0.05px #fff;">7/1/2016</div>
<div class="t" style="left:103.98px;top:188.10px;font-size:13px;line-height:13px;color:#ffffff;transform:scaleX(1.0174);transform-origin:center top;-webkit-text-stroke:0.05px #fff;">1151.75</div>
<div class="t" style="left:181.98px;top:188.10px;font-size:13px;line-height:13px;color:#ffffff;transform:scaleX(1.0174);transform-origin:center top;-webkit-text-stroke:0.05px #fff;">1161.05</div>
<div class="t" style="left:265.98px;top:188.10px;font-size:13px;line-height:13px;color:#ffffff;transform:scaleX(1.0174);transform-origin:center top;-webkit-text-stroke:0.05px #fff;">1151.25</div>
<div class="t" style="left:349.98px;top:188.10px;font-size:13px;line-height:13px;color:#ffffff;transform:scaleX(1.0174);transform-origin:center top;-webkit-text-stroke:0.05px #fff;">1156.77</div>
<div class="t" style="left:434.46px;top:188.10px;font-size:13px;line-height:13px;color:#ffffff;transform:scaleX(1.0036);transform-origin:center top;-webkit-text-stroke:0.05px #fff;">34,588,900</div>
<div class="t" style="left:537.98px;top:188.10px;font-size:13px;line-height:13px;color:#ffffff;transform:scaleX(1.0174);transform-origin:center top;-webkit-text-stroke:0.05px #fff;">1156.77</div>
<div class="t" style="left:26.58px;top:208.90px;font-size:13px;line-height:13px;color:#ffffff;transform:scaleX(1.0819);transform-origin:center top;-webkit-text-stroke:0.05px #fff;">6/30/2016</div>
<div class="t" style="left:103.98px;top:208.90px;font-size:13px;line-height:13px;color:#ffffff;transform:scaleX(1.0174);transform-origin:center top;-webkit-text-stroke:0.05px #fff;">1132.15</div>
<div class="t" style="left:181.98px;top:208.90px;font-size:13px;line-height:13px;color:#ffffff;transform:scaleX(1.0174);transform-origin:center top;-webkit-text-stroke:0.05px #fff;">1152.03</div>
<div class="t" style="left:265.98px;top:208.90px;font-size:13px;line-height:13px;color:#ffffff;transform:scaleX(1.0174);transform-origin:center top;-webkit-text-stroke:0.05px #fff;">1128.91</div>
<div class="t" style="left:349.98px;top:208.90px;font-size:13px;line-height:13px;color:#ffffff;transform:scaleX(1.0174);transform-origin:center top;-webkit-text-stroke:0.05px #fff;">1151.92</div>
<div class="t" style="left:434.46px;top:208.90px;font-size:13px;line-height:13px;color:#ffffff;transform:scaleX(1.0036);transform-origin:center top;-webkit-text-stroke:0.05px #fff;">46,228,200</div>
<div class="t" style="left:537.98px;top:208.90px;font-size:13px;line-height:13px;color:#ffffff;transform:scaleX(1.0174);transform-origin:center top;-webkit-text-stroke:0.05px #fff;">1151.92</div>
<div class="t" style="left:26.58px;top:228.90px;font-size:13px;line-height:13px;color:#ffffff;transform:scaleX(1.0819);transform-origin:center top;-webkit-text-stroke:0.05px #fff;">6/29/2016</div>
<div class="t" style="left:104.47px;top:228.90px;font-size:13px;line-height:13px;color:#ffffff;transform:scaleX(1.0392);transform-origin:center top;-webkit-text-stroke:0.05px #fff;">1110.79</div>
<div class="t" style="left:181.98px;top:228.90px;font-size:13px;line-height:13px;color:#ffffff;transform:scaleX(1.0174);transform-origin:center top;-webkit-text-stroke:0.05px #fff;">1132.62</div>
<div class="t" style="left:266.47px;top:228.90px;font-size:13px;line-height:13px;color:#ffffff;transform:scaleX(1.0392);transform-origin:center top;-webkit-text-stroke:0.05px #fff;">1110.79</div>
<div class="t" style="left:349.98px;top:228.90px;font-size:13px;line-height:13px;color:#ffffff;transform:scaleX(1.0174);transform-origin:center top;-webkit-text-stroke:0.05px #fff;">1131.62</div>
<div class="t" style="left:434.46px;top:228.90px;font-size:13px;line-height:13px;color:#ffffff;transform:scaleX(1.0036);transform-origin:center top;-webkit-text-stroke:0.05px #fff;">42,417,400</div>
<div class="t" style="left:537.98px;top:228.90px;font-size:13px;line-height:13px;color:#ffffff;transform:scaleX(1.0174);transform-origin:center top;-webkit-text-stroke:0.05px #fff;">1131.62</div>
<div class="t" style="left:26.58px;top:248.90px;font-size:13px;line-height:13px;color:#ffffff;transform:scaleX(1.0819);transform-origin:center top;-webkit-text-stroke:0.05px #fff;">6/28/2016</div>
<div class="t" style="left:103.50px;top:248.90px;font-size:13px;line-height:13px;color:#ffffff;transform:scaleX(0.9964);transform-origin:center top;-webkit-text-stroke:0.05px #fff;">1092.17</div>
<div class="t" style="left:182.47px;top:248.90px;font-size:13px;line-height:13px;color:#ffffff;transform:scaleX(1.0392);transform-origin:center top;-webkit-text-stroke:0.05px #fff;">1110.50</div>
<div class="t" style="left:265.50px;top:248.90px;font-size:13px;line-height:13px;color:#ffffff;transform:scaleX(0.9964);transform-origin:center top;-webkit-text-stroke:0.05px #fff;">1092.17</div>
<div class="t" style="left:349.98px;top:248.90px;font-size:13px;line-height:13px;color:#ffffff;transform:scaleX(1.0174);transform-origin:center top;-webkit-text-stroke:0.05px #fff;">1107.30</div>
<div class="t" style="left:434.46px;top:248.90px;font-size:13px;line-height:13px;color:#ffffff;transform:scaleX(1.0036);transform-origin:center top;-webkit-text-stroke:0.05px #fff;">43,858,100</div>
<div class="t" style="left:537.98px;top:248.90px;font-size:13px;line-height:13px;color:#ffffff;transform:scaleX(1.0174);transform-origin:center top;-webkit-text-stroke:0.05px #fff;">1107.30</div>
<div class="t" style="left:26.58px;top:268.90px;font-size:13px;line-height:13px;color:#ffffff;transform:scaleX(1.0819);transform-origin:center top;-webkit-text-stroke:0.05px #fff;">6/27/2016</div>
<div class="t" style="left:103.98px;top:268.90px;font-size:13px;line-height:13px;color:#ffffff;transform:scaleX(1.0174);transform-origin:center top;-webkit-text-stroke:0.05px #fff;">1123.81</div>
<div class="t" style="left:181.98px;top:268.90px;font-size:13px;line-height:13px;color:#ffffff;transform:scaleX(1.0174);transform-origin:center top;-webkit-text-stroke:0.05px #fff;">1123.81</div>
<div class="t" style="left:265.50px;top:268.90px;font-size:13px;line-height:13px;color:#ffffff;transform:scaleX(0.9964);transform-origin:center top;-webkit-text-stroke:0.05px #fff;">1085.88</div>
<div class="t" style="left:349.50px;top:268.90px;font-size:13px;line-height:13px;color:#ffffff;transform:scaleX(0.9964);transform-origin:center top;-webkit-text-stroke:0.05px #fff;">1089.65</div>
<div class="t" style="left:434.46px;top:268.90px;font-size:13px;line-height:13px;color:#ffffff;transform:scaleX(1.0036);transform-origin:center top;-webkit-text-stroke:0.05px #fff;">54,312,200</div>
<div class="t" style="left:537.50px;top:268.90px;font-size:13px;line-height:13px;color:#ffffff;transform:scaleX(0.9964);transform-origin:center top;-webkit-text-stroke:0.05px #fff;">1089.65</div>
<div class="t" style="left:26.58px;top:288.90px;font-size:13px;line-height:13px;color:#ffffff;transform:scaleX(1.0819);transform-origin:center top;-webkit-text-stroke:0.05px #fff;">6/24/2016</div>
<div class="t" style="left:103.98px;top:288.90px;font-size:13px;line-height:13px;color:#ffffff;transform:scaleX(1.0174);transform-origin:center top;-webkit-text-stroke:0.05px #fff;">1162.92</div>
<div class="t" style="left:181.98px;top:288.90px;font-size:13px;line-height:13px;color:#ffffff;transform:scaleX(1.0174);transform-origin:center top;-webkit-text-stroke:0.05px #fff;">1162.92</div>
<div class="t" style="left:265.98px;top:288.90px;font-size:13px;line-height:13px;color:#ffffff;transform:scaleX(1.0174);transform-origin:center top;-webkit-text-stroke:0.05px #fff;">1123.49</div>
<div class="t" style="left:349.98px;top:288.90px;font-size:13px;line-height:13px;color:#ffffff;transform:scaleX(1.0174);transform-origin:center top;-webkit-text-stroke:0.05px #fff;">1127.54</div>
<div class="t" style="left:434.46px;top:288.90px;font-size:13px;line-height:13px;color:#ffffff;transform:scaleX(1.0036);transform-origin:center top;-webkit-text-stroke:0.05px #fff;">75,974,500</div>
<div class="t" style="left:537.98px;top:288.90px;font-size:13px;line-height:13px;color:#ffffff;transform:scaleX(1.0174);transform-origin:center top;-webkit-text-stroke:0.05px #fff;">1127.54</div>
<div class="t" style="left:624.40px;top:288.90px;font-size:13px;line-height:13px;color:#ffffff;transform:scaleX(0.9760);transform-origin:center top;-webkit-text-stroke:0.05px #fff;">-3.04%</div>
<div class="t" style="left:26.58px;top:308.90px;font-size:13px;line-height:13px;color:#ffffff;transform:scaleX(1.0819);transform-origin:center top;-webkit-text-stroke:0.05px #fff;">6/23/2016</div>
<div class="t" style="left:103.98px;top:308.90px;font-size:13px;line-height:13px;color:#ffffff;transform:scaleX(1.0174);transform-origin:center top;-webkit-text-stroke:0.05px #fff;">1151.51</div>
<div class="t" style="left:181.98px;top:308.90px;font-size:13px;line-height:13px;color:#ffffff;transform:scaleX(1.0174);transform-origin:center top;-webkit-text-stroke:0.05px #fff;">1172.22</div>
<div class="t" style="left:265.98px;top:308.90px;font-size:13px;line-height:13px;color:#ffffff;transform:scaleX(1.0174);transform-origin:center top;-webkit-text-stroke:0.05px #fff;">1151.51</div>
<div class="t" style="left:349.98px;top:308.90px;font-size:13px;line-height:13px;color:#ffffff;transform:scaleX(1.0174);transform-origin:center top;-webkit-text-stroke:0.05px #fff;">1172.22</div>
<div class="t" style="left:434.46px;top:308.90px;font-size:13px;line-height:13px;color:#ffffff;transform:scaleX(1.0036);transform-origin:center top;-webkit-text-stroke:0.05px #fff;">32,979,400</div>
<div class="t" style="left:537.98px;top:308.90px;font-size:13px;line-height:13px;color:#ffffff;transform:scaleX(1.0174);transform-origin:center top;-webkit-text-stroke:0.05px #fff;">1172.22</div>
<div class="t" style="left:626.56px;top:308.90px;font-size:13px;line-height:13px;color:#ffffff;transform:scaleX(0.9653);transform-origin:center top;-webkit-text-stroke:0.05px #fff;">1.80%</div>
<div class="t" style="left:26.58px;top:328.90px;font-size:13px;line-height:13px;color:#ffffff;transform:scaleX(1.0819);transform-origin:center top;-webkit-text-stroke:0.05px #fff;">6/22/2016</div>
<div class="t" style="left:103.98px;top:328.90px;font-size:13px;line-height:13px;color:#ffffff;transform:scaleX(1.0174);transform-origin:center top;-webkit-text-stroke:0.05px #fff;">1154.15</div>
<div class="t" style="left:181.98px;top:328.90px;font-size:13px;line-height:13px;color:#ffffff;transform:scaleX(1.0174);transform-origin:center top;-webkit-text-stroke:0.05px #fff;">1161.28</div>
<div class="t" style="left:265.98px;top:328.90px;font-size:13px;line-height:13px;color:#ffffff;transform:scaleX(1.0174);transform-origin:center top;-webkit-text-stroke:0.05px #fff;">1148.70</div>
<div class="t" style="left:349.98px;top:328.90px;font-size:13px;line-height:13px;color:#ffffff;transform:scaleX(1.0174);transform-origin:center top;-webkit-text-stroke:0.05px #fff;">1148.97</div>
<div class="t" style="left:434.46px;top:328.90px;font-size:13px;line-height:13px;color:#ffffff;transform:scaleX(1.0036);transform-origin:center top;-webkit-text-stroke:0.05px #fff;">31,681,600</div>
<div class="t" style="left:537.98px;top:328.90px;font-size:13px;line-height:13px;color:#ffffff;transform:scaleX(1.0174);transform-origin:center top;-webkit-text-stroke:0.05px #fff;">1148.97</div>
<div class="t" style="left:624.40px;top:328.90px;font-size:13px;line-height:13px;color:#ffffff;transform:scaleX(0.9760);transform-origin:center top;-webkit-text-stroke:0.05px #fff;">-0.45%</div>
<div class="t" style="left:26.58px;top:348.90px;font-size:13px;line-height:13px;color:#ffffff;transform:scaleX(1.0819);transform-origin:center top;-webkit-text-stroke:0.05px #fff;">6/21/2016</div>
<div class="t" style="left:103.98px;top:348.90px;font-size:13px;line-height:13px;color:#ffffff;transform:scaleX(1.0174);transform-origin:center top;-webkit-text-stroke:0.05px #fff;">1158.12</div>
<div class="t" style="left:181.98px;top:348.90px;font-size:13px;line-height:13px;color:#ffffff;transform:scaleX(1.0174);transform-origin:center top;-webkit-text-stroke:0.05px #fff;">1158.85</div>
<div class="t" style="left:265.98px;top:348.90px;font-size:13px;line-height:13px;color:#ffffff;transform:scaleX(1.0174);transform-origin:center top;-webkit-text-stroke:0.05px #fff;">1147.77</div>
<div class="t" style="left:349.98px;top:348.90px;font-size:13px;line-height:13px;color:#ffffff;transform:scaleX(1.0174);transform-origin:center top;-webkit-text-stroke:0.05px #fff;">1153.87</div>
<div class="t" style="left:434.46px;top:348.90px;font-size:13px;line-height:13px;color:#ffffff;transform:scaleX(1.0036);transform-origin:center top;-webkit-text-stroke:0.05px #fff;">32,328,800</div>
<div class="t" style="left:537.98px;top:348.90px;font-size:13px;line-height:13px;color:#ffffff;transform:scaleX(1.0174);transform-origin:center top;-webkit-text-stroke:0.05px #fff;">1153.87</div>
<div class="t" style="left:624.40px;top:348.90px;font-size:13px;line-height:13px;color:#ffffff;transform:scaleX(0.9760);transform-origin:center top;-webkit-text-stroke:0.05px #fff;">-0.37%</div>
<div class="t" style="left:26.58px;top:368.90px;font-size:13px;line-height:13px;color:#ffffff;transform:scaleX(1.0819);transform-origin:center top;-webkit-text-stroke:0.05px #fff;">6/20/2016</div>
<div class="t" style="left:103.98px;top:368.90px;font-size:13px;line-height:13px;color:#ffffff;transform:scaleX(1.0174);transform-origin:center top;-webkit-text-stroke:0.05px #fff;">1146.39</div>
<div class="t" style="left:181.98px;top:368.90px;font-size:13px;line-height:13px;color:#ffffff;transform:scaleX(1.0174);transform-origin:center top;-webkit-text-stroke:0.05px #fff;">1167.12</div>
<div class="t" style="left:265.98px;top:368.90px;font-size:13px;line-height:13px;color:#ffffff;transform:scaleX(1.0174);transform-origin:center top;-webkit-text-stroke:0.05px #fff;">1146.39</div>
<div class="t" style="left:349.98px;top:368.90px;font-size:13px;line-height:13px;color:#ffffff;transform:scaleX(1.0174);transform-origin:center top;-webkit-text-stroke:0.05px #fff;">1157.70</div>
<div class="t" style="left:434.46px;top:368.90px;font-size:13px;line-height:13px;color:#ffffff;transform:scaleX(1.0036);transform-origin:center top;-webkit-text-stroke:0.05px #fff;">34,674,400</div>
<div class="t" style="left:537.98px;top:368.90px;font-size:13px;line-height:13px;color:#ffffff;transform:scaleX(1.0174);transform-origin:center top;-webkit-text-stroke:0.05px #fff;">1157.70</div>
<div class="t" style="left:626.56px;top:368.90px;font-size:13px;line-height:13px;color:#ffffff;transform:scaleX(0.9653);transform-origin:center top;-webkit-text-stroke:0.05px #fff;">0.99%</div>
<div class="t" style="left:26.58px;top:388.90px;font-size:13px;line-height:13px;color:#ffffff;transform:scaleX(1.0819);transform-origin:center top;-webkit-text-stroke:0.05px #fff;">6/17/2016</div>
<div class="t" style="left:103.98px;top:388.90px;font-size:13px;line-height:13px;color:#ffffff;transform:scaleX(1.0174);transform-origin:center top;-webkit-text-stroke:0.05px #fff;">1148.96</div>
<div class="t" style="left:181.98px;top:388.90px;font-size:13px;line-height:13px;color:#ffffff;transform:scaleX(1.0174);transform-origin:center top;-webkit-text-stroke:0.05px #fff;">1151.69</div>
<div class="t" style="left:265.98px;top:388.90px;font-size:13px;line-height:13px;color:#ffffff;transform:scaleX(1.0174);transform-origin:center top;-webkit-text-stroke:0.05px #fff;">1141.49</div>
<div class="t" style="left:349.98px;top:388.90px;font-size:13px;line-height:13px;color:#ffffff;transform:scaleX(1.0174);transform-origin:center top;-webkit-text-stroke:0.05px #fff;">1144.70</div>
<div class="t" style="left:434.46px;top:388.90px;font-size:13px;line-height:13px;color:#ffffff;transform:scaleX(1.0036);transform-origin:center top;-webkit-text-stroke:0.05px #fff;">49,026,300</div>
<div class="t" style="left:537.98px;top:388.90px;font-size:13px;line-height:13px;color:#ffffff;transform:scaleX(1.0174);transform-origin:center top;-webkit-text-stroke:0.05px #fff;">1144.70</div>
<div class="t" style="left:624.40px;top:388.90px;font-size:13px;line-height:13px;color:#ffffff;transform:scaleX(0.9760);transform-origin:center top;-webkit-text-stroke:0.05px #fff;">-0.37%</div>
<div class="t" style="left:26.58px;top:408.90px;font-size:13px;line-height:13px;color:#ffffff;transform:scaleX(1.0819);transform-origin:center top;-webkit-text-stroke:0.05px #fff;">6/16/2016</div>
<div class="t" style="left:103.98px;top:408.90px;font-size:13px;line-height:13px;color:#ffffff;transform:scaleX(1.0174);transform-origin:center top;-webkit-text-stroke:0.05px #fff;">1147.86</div>
<div class="t" style="left:181.98px;top:408.90px;font-size:13px;line-height:13px;color:#ffffff;transform:scaleX(1.0174);transform-origin:center top;-webkit-text-stroke:0.05px #fff;">1148.86</div>
<div class="t" style="left:265.98px;top:408.90px;font-size:13px;line-height:13px;color:#ffffff;transform:scaleX(1.0174);transform-origin:center top;-webkit-text-stroke:0.05px #fff;">1133.10</div>
<div class="t" style="left:349.98px;top:408.90px;font-size:13px;line-height:13px;color:#ffffff;transform:scaleX(1.0174);transform-origin:center top;-webkit-text-stroke:0.05px #fff;">1148.19</div>
<div class="t" style="left:434.46px;top:408.90px;font-size:13px;line-height:13px;color:#ffffff;transform:scaleX(1.0036);transform-origin:center top;-webkit-text-stroke:0.05px #fff;">36,282,800</div>
<div class="t" style="left:537.98px;top:408.90px;font-size:13px;line-height:13px;color:#ffffff;transform:scaleX(1.0174);transform-origin:center top;-webkit-text-stroke:0.05px #fff;">1148.19</div>
<div class="t" style="left:626.56px;top:408.90px;font-size:13px;line-height:13px;color:#ffffff;transform:scaleX(0.9653);transform-origin:center top;-webkit-text-stroke:0.05px #fff;">0.03%</div>
<div class="t" style="left:26.58px;top:428.90px;font-size:13px;line-height:13px;color:#ffffff;transform:scaleX(1.0819);transform-origin:center top;-webkit-text-stroke:0.05px #fff;">6/15/2016</div>
<div class="t" style="left:103.98px;top:428.90px;font-size:13px;line-height:13px;color:#ffffff;transform:scaleX(1.0174);transform-origin:center top;-webkit-text-stroke:0.05px #fff;">1148.09</div>
<div class="t" style="left:181.98px;top:428.90px;font-size:13px;line-height:13px;color:#ffffff;transform:scaleX(1.0174);transform-origin:center top;-webkit-text-stroke:0.05px #fff;">1157.96</div>
<div class="t" style="left:265.98px;top:428.90px;font-size:13px;line-height:13px;color:#ffffff;transform:scaleX(1.0174);transform-origin:center top;-webkit-text-stroke:0.05px #fff;">1148.09</div>
<div class="t" style="left:349.98px;top:428.90px;font-size:13px;line-height:13px;color:#ffffff;transform:scaleX(1.0174);transform-origin:center top;-webkit-text-stroke:0.05px #fff;">1149.30</div>
<div class="t" style="left:434.46px;top:428.90px;font-size:13px;line-height:13px;color:#ffffff;transform:scaleX(1.0036);transform-origin:center top;-webkit-text-stroke:0.05px #fff;">35,447,200</div>
<div class="t" style="left:537.98px;top:428.90px;font-size:13px;line-height:13px;color:#ffffff;transform:scaleX(1.0174);transform-origin:center top;-webkit-text-stroke:0.05px #fff;">1149.30</div>
<div class="t" style="left:626.56px;top:428.90px;font-size:13px;line-height:13px;color:#ffffff;transform:scaleX(0.9653);transform-origin:center top;-webkit-text-stroke:0.05px #fff;">0.10%</div>
<div class="t" style="left:26.58px;top:448.90px;font-size:13px;line-height:13px;color:#ffffff;transform:scaleX(1.0819);transform-origin:center top;-webkit-text-stroke:0.05px #fff;">6/14/2016</div>
<div class="t" style="left:103.98px;top:448.90px;font-size:13px;line-height:13px;color:#ffffff;transform:scaleX(1.0174);transform-origin:center top;-webkit-text-stroke:0.05px #fff;">1149.59</div>
<div class="t" style="left:181.98px;top:448.90px;font-size:13px;line-height:13px;color:#ffffff;transform:scaleX(1.0174);transform-origin:center top;-webkit-text-stroke:0.05px #fff;">1153.22</div>
<div class="t" style="left:265.98px;top:448.90px;font-size:13px;line-height:13px;color:#ffffff;transform:scaleX(1.0174);transform-origin:center top;-webkit-text-stroke:0.05px #fff;">1141.23</div>
<div class="t" style="left:349.98px;top:448.90px;font-size:13px;line-height:13px;color:#ffffff;transform:scaleX(1.0174);transform-origin:center top;-webkit-text-stroke:0.05px #fff;">1147.82</div>
<div class="t" style="left:434.46px;top:448.90px;font-size:13px;line-height:13px;color:#ffffff;transform:scaleX(1.0036);transform-origin:center top;-webkit-text-stroke:0.05px #fff;">37,597,700</div>
<div class="t" style="left:537.98px;top:448.90px;font-size:13px;line-height:13px;color:#ffffff;transform:scaleX(1.0174);transform-origin:center top;-webkit-text-stroke:0.05px #fff;">1147.82</div>
<div class="t" style="left:624.40px;top:448.90px;font-size:13px;line-height:13px;color:#ffffff;transform:scaleX(0.9760);transform-origin:center top;-webkit-text-stroke:0.05px #fff;">-0.13%</div>
<div class="t" style="left:26.58px;top:468.90px;font-size:13px;line-height:13px;color:#ffffff;transform:scaleX(1.0819);transform-origin:center top;-webkit-text-stroke:0.05px #fff;">6/13/2016</div>
<div class="t" style="left:103.98px;top:468.90px;font-size:13px;line-height:13px;color:#ffffff;transform:scaleX(1.0174);transform-origin:center top;-webkit-text-stroke:0.05px #fff;">1162.53</div>
<div class="t" style="left:181.98px;top:468.90px;font-size:13px;line-height:13px;color:#ffffff;transform:scaleX(1.0174);transform-origin:center top;-webkit-text-stroke:0.05px #fff;">1164.90</div>
<div class="t" style="left:265.98px;top:468.90px;font-size:13px;line-height:13px;color:#ffffff;transform:scaleX(1.0174);transform-origin:center top;-webkit-text-stroke:0.05px #fff;">1149.48</div>
<div class="t" style="left:349.98px;top:468.90px;font-size:13px;line-height:13px;color:#ffffff;transform:scaleX(1.0174);transform-origin:center top;-webkit-text-stroke:0.05px #fff;">1150.70</div>
<div class="t" style="left:434.46px;top:468.90px;font-size:13px;line-height:13px;color:#ffffff;transform:scaleX(1.0036);transform-origin:center top;-webkit-text-stroke:0.05px #fff;">33,920,300</div>
<div class="t" style="left:537.98px;top:468.90px;font-size:13px;line-height:13px;color:#ffffff;transform:scaleX(1.0174);transform-origin:center top;-webkit-text-stroke:0.05px #fff;">1150.70</div>
<div class="t" style="left:624.40px;top:468.90px;font-size:13px;line-height:13px;color:#ffffff;transform:scaleX(0.9760);transform-origin:center top;-webkit-text-stroke:0.05px #fff;">-1.14%</div>
<div class="t" style="left:26.58px;top:488.90px;font-size:13px;line-height:13px;color:#ffffff;transform:scaleX(1.0819);transform-origin:center top;-webkit-text-stroke:0.05px #fff;">6/10/2016</div>
<div class="t" style="left:103.98px;top:488.90px;font-size:13px;line-height:13px;color:#ffffff;transform:scaleX(1.0174);transform-origin:center top;-webkit-text-stroke:0.05px #fff;">1178.38</div>
<div class="t" style="left:181.98px;top:488.90px;font-size:13px;line-height:13px;color:#ffffff;transform:scaleX(1.0174);transform-origin:center top;-webkit-text-stroke:0.05px #fff;">1178.38</div>
<div class="t" style="left:265.98px;top:488.90px;font-size:13px;line-height:13px;color:#ffffff;transform:scaleX(1.0174);transform-origin:center top;-webkit-text-stroke:0.05px #fff;">1161.27</div>
<div class="t" style="left:349.98px;top:488.90px;font-size:13px;line-height:13px;color:#ffffff;transform:scaleX(1.0174);transform-origin:center top;-webkit-text-stroke:0.05px #fff;">1163.93</div>
<div class="t" style="left:434.46px;top:488.90px;font-size:13px;line-height:13px;color:#ffffff;transform:scaleX(1.0036);transform-origin:center top;-webkit-text-stroke:0.05px #fff;">35,150,100</div>
<div class="t" style="left:537.98px;top:488.90px;font-size:13px;line-height:13px;color:#ffffff;transform:scaleX(1.0174);transform-origin:center top;-webkit-text-stroke:0.05px #fff;">1163.93</div>
<div class="t" style="left:624.40px;top:488.90px;font-size:13px;line-height:13px;color:#ffffff;transform:scaleX(0.9760);transform-origin:center top;-webkit-text-stroke:0.05px #fff;">-1.46%</div>
<div class="t" style="left:30.20px;top:509.90px;font-size:13px;line-height:13px;color:#ffffff;transform:scaleX(1.0913);transform-origin:center top;-webkit-text-stroke:0.05px #fff;">6/9/2016</div>
<div class="t" style="left:103.98px;top:509.90px;font-size:13px;line-height:13px;color:#ffffff;transform:scaleX(1.0174);transform-origin:center top;-webkit-text-stroke:0.05px #fff;">1188.23</div>
<div class="t" style="left:181.98px;top:509.90px;font-size:13px;line-height:13px;color:#ffffff;transform:scaleX(1.0174);transform-origin:center top;-webkit-text-stroke:0.05px #fff;">1188.23</div>
<div class="t" style="left:265.98px;top:509.90px;font-size:13px;line-height:13px;color:#ffffff;transform:scaleX(1.0174);transform-origin:center top;-webkit-text-stroke:0.05px #fff;">1177.86</div>
<div class="t" style="left:349.98px;top:509.90px;font-size:13px;line-height:13px;color:#ffffff;transform:scaleX(1.0174);transform-origin:center top;-webkit-text-stroke:0.05px #fff;">1181.20</div>
<div class="t" style="left:434.46px;top:509.90px;font-size:13px;line-height:13px;color:#ffffff;transform:scaleX(1.0036);transform-origin:center top;-webkit-text-stroke:0.05px #fff;">32,903,200</div>
<div class="t" style="left:537.98px;top:509.90px;font-size:13px;line-height:13px;color:#ffffff;transform:scaleX(1.0174);transform-origin:center top;-webkit-text-stroke:0.05px #fff;">1181.20</div>
<div class="t" style="left:624.40px;top:509.90px;font-size:13px;line-height:13px;color:#ffffff;transform:scaleX(0.9760);transform-origin:center top;-webkit-text-stroke:0.05px #fff;">-0.65%</div>
<div class="t" style="left:30.20px;top:529.90px;font-size:13px;line-height:13px;color:#ffffff;transform:scaleX(1.0913);transform-origin:center top;-webkit-text-stroke:0.05px #fff;">6/8/2016</div>
<div class="t" style="left:103.98px;top:529.90px;font-size:13px;line-height:13px;color:#ffffff;transform:scaleX(1.0174);transform-origin:center top;-webkit-text-stroke:0.05px #fff;">1180.20</div>
<div class="t" style="left:181.98px;top:529.90px;font-size:13px;line-height:13px;color:#ffffff;transform:scaleX(1.0174);transform-origin:center top;-webkit-text-stroke:0.05px #fff;">1190.17</div>
<div class="t" style="left:265.98px;top:529.90px;font-size:13px;line-height:13px;color:#ffffff;transform:scaleX(1.0174);transform-origin:center top;-webkit-text-stroke:0.05px #fff;">1180.20</div>
<div class="t" style="left:349.98px;top:529.90px;font-size:13px;line-height:13px;color:#ffffff;transform:scaleX(1.0174);transform-origin:center top;-webkit-text-stroke:0.05px #fff;">1188.95</div>
<div class="t" style="left:434.46px;top:529.90px;font-size:13px;line-height:13px;color:#ffffff;transform:scaleX(1.0036);transform-origin:center top;-webkit-text-stroke:0.05px #fff;">35,620,600</div>
<div class="t" style="left:537.98px;top:529.90px;font-size:13px;line-height:13px;color:#ffffff;transform:scaleX(1.0174);transform-origin:center top;-webkit-text-stroke:0.05px #fff;">1188.95</div>
<div class="t" style="left:626.56px;top:529.90px;font-size:13px;line-height:13px;color:#ffffff;transform:scaleX(0.9653);transform-origin:center top;-webkit-text-stroke:0.05px #fff;">0.76%</div>
<div class="t" style="left:30.20px;top:549.90px;font-size:13px;line-height:13px;color:#ffffff;transform:scaleX(1.0913);transform-origin:center top;-webkit-text-stroke:0.05px #fff;">6/7/2016</div>
<div class="t" style="left:103.98px;top:549.90px;font-size:13px;line-height:13px;color:#ffffff;transform:scaleX(1.0174);transform-origin:center top;-webkit-text-stroke:0.05px #fff;">1177.19</div>
<div class="t" style="left:181.98px;top:549.90px;font-size:13px;line-height:13px;color:#ffffff;transform:scaleX(1.0174);transform-origin:center top;-webkit-text-stroke:0.05px #fff;">1183.75</div>
<div class="t" style="left:265.98px;top:549.90px;font-size:13px;line-height:13px;color:#ffffff;transform:scaleX(1.0174);transform-origin:center top;-webkit-text-stroke:0.05px #fff;">1175.05</div>
<div class="t" style="left:349.98px;top:549.90px;font-size:13px;line-height:13px;color:#ffffff;transform:scaleX(1.0174);transform-origin:center top;-webkit-text-stroke:0.05px #fff;">1179.97</div>
<div class="t" style="left:434.46px;top:549.90px;font-size:13px;line-height:13px;color:#ffffff;transform:scaleX(1.0036);transform-origin:center top;-webkit-text-stroke:0.05px #fff;">35,347,300</div>
<div class="t" style="left:537.98px;top:549.90px;font-size:13px;line-height:13px;color:#ffffff;transform:scaleX(1.0174);transform-origin:center top;-webkit-text-stroke:0.05px #fff;">1179.97</div>
<div class="t" style="left:626.56px;top:549.90px;font-size:13px;line-height:13px;color:#ffffff;transform:scaleX(0.9653);transform-origin:center top;-webkit-text-stroke:0.05px #fff;">0.26%</div>
<div class="t" style="left:30.20px;top:569.90px;font-size:13px;line-height:13px;color:#ffffff;transform:scaleX(1.0913);transform-origin:center top;-webkit-text-stroke:0.05px #fff;">6/6/2016</div>
<div class="t" style="left:103.98px;top:569.90px;font-size:13px;line-height:13px;color:#ffffff;transform:scaleX(1.0174);transform-origin:center top;-webkit-text-stroke:0.05px #fff;">1164.26</div>
<div class="t" style="left:181.98px;top:569.90px;font-size:13px;line-height:13px;color:#ffffff;transform:scaleX(1.0174);transform-origin:center top;-webkit-text-stroke:0.05px #fff;">1179.34</div>
<div class="t" style="left:265.98px;top:569.90px;font-size:13px;line-height:13px;color:#ffffff;transform:scaleX(1.0174);transform-origin:center top;-webkit-text-stroke:0.05px #fff;">1163.68</div>
<div class="t" style="left:349.98px;top:569.90px;font-size:13px;line-height:13px;color:#ffffff;transform:scaleX(1.0174);transform-origin:center top;-webkit-text-stroke:0.05px #fff;">1176.87</div>
<div class="t" style="left:434.46px;top:569.90px;font-size:13px;line-height:13px;color:#ffffff;transform:scaleX(1.0036);transform-origin:center top;-webkit-text-stroke:0.05px #fff;">34,420,200</div>
<div class="t" style="left:537.98px;top:569.90px;font-size:13px;line-height:13px;color:#ffffff;transform:scaleX(1.0174);transform-origin:center top;-webkit-text-stroke:0.05px #fff;">1176.87</div>
<div class="t" style="left:626.56px;top:569.90px;font-size:13px;line-height:13px;color:#ffffff;transform:scaleX(0.9653);transform-origin:center top;-webkit-text-stroke:0.05px #fff;">1.09%</div>
<div class="t" style="left:30.20px;top:589.90px;font-size:13px;line-height:13px;color:#ffffff;transform:scaleX(1.0913);transform-origin:center top;-webkit-text-stroke:0.05px #fff;">6/3/2016</div>
<div class="t" style="left:103.98px;top:589.90px;font-size:13px;line-height:13px;color:#ffffff;transform:scaleX(1.0174);transform-origin:center top;-webkit-text-stroke:0.05px #fff;">1170.39</div>
<div class="t" style="left:181.98px;top:589.90px;font-size:13px;line-height:13px;color:#ffffff;transform:scaleX(1.0174);transform-origin:center top;-webkit-text-stroke:0.05px #fff;">1170.39</div>
<div class="t" style="left:265.98px;top:589.90px;font-size:13px;line-height:13px;color:#ffffff;transform:scaleX(1.0174);transform-origin:center top;-webkit-text-stroke:0.05px #fff;">1155.84</div>
<div class="t" style="left:349.98px;top:589.90px;font-size:13px;line-height:13px;color:#ffffff;transform:scaleX(1.0174);transform-origin:center top;-webkit-text-stroke:0.05px #fff;">1164.14</div>
<div class="t" style="left:434.46px;top:589.90px;font-size:13px;line-height:13px;color:#ffffff;transform:scaleX(1.0036);transform-origin:center top;-webkit-text-stroke:0.05px #fff;">36,277,800</div>
<div class="t" style="left:537.98px;top:589.90px;font-size:13px;line-height:13px;color:#ffffff;transform:scaleX(1.0174);transform-origin:center top;-webkit-text-stroke:0.05px #fff;">1164.14</div>
<div class="t" style="left:624.40px;top:589.90px;font-size:13px;line-height:13px;color:#ffffff;transform:scaleX(0.9760);transform-origin:center top;-webkit-text-stroke:0.05px #fff;">-0.55%</div>
<div class="t" style="left:30.20px;top:609.90px;font-size:13px;line-height:13px;color:#ffffff;transform:scaleX(1.0913);transform-origin:center top;-webkit-text-stroke:0.05px #fff;">6/2/2016</div>
<div class="t" style="left:103.98px;top:609.90px;font-size:13px;line-height:13px;color:#ffffff;transform:scaleX(1.0174);transform-origin:center top;-webkit-text-stroke:0.05px #fff;">1162.74</div>
<div class="t" style="left:181.98px;top:609.90px;font-size:13px;line-height:13px;color:#ffffff;transform:scaleX(1.0174);transform-origin:center top;-webkit-text-stroke:0.05px #fff;">1170.77</div>
<div class="t" style="left:265.98px;top:609.90px;font-size:13px;line-height:13px;color:#ffffff;transform:scaleX(1.0174);transform-origin:center top;-webkit-text-stroke:0.05px #fff;">1159.36</div>
<div class="t" style="left:349.98px;top:609.90px;font-size:13px;line-height:13px;color:#ffffff;transform:scaleX(1.0174);transform-origin:center top;-webkit-text-stroke:0.05px #fff;">1170.58</div>
<div class="t" style="left:434.46px;top:609.90px;font-size:13px;line-height:13px;color:#ffffff;transform:scaleX(1.0036);transform-origin:center top;-webkit-text-stroke:0.05px #fff;">36,327,200</div>
<div class="t" style="left:537.98px;top:609.90px;font-size:13px;line-height:13px;color:#ffffff;transform:scaleX(1.0174);transform-origin:center top;-webkit-text-stroke:0.05px #fff;">1170.58</div>
<div class="t" style="left:626.56px;top:609.90px;font-size:13px;line-height:13px;color:#ffffff;transform:scaleX(0.9653);transform-origin:center top;-webkit-text-stroke:0.05px #fff;">0.55%</div>
<div class="t" style="left:30.20px;top:629.90px;font-size:13px;line-height:13px;color:#ffffff;transform:scaleX(1.0913);transform-origin:center top;-webkit-text-stroke:0.05px #fff;">6/1/2016</div>
<div class="t" style="left:103.98px;top:629.90px;font-size:13px;line-height:13px;color:#ffffff;transform:scaleX(1.0174);transform-origin:center top;-webkit-text-stroke:0.05px #fff;">1154.51</div>
<div class="t" style="left:181.98px;top:629.90px;font-size:13px;line-height:13px;color:#ffffff;transform:scaleX(1.0174);transform-origin:center top;-webkit-text-stroke:0.05px #fff;">1163.43</div>
<div class="t" style="left:265.98px;top:629.90px;font-size:13px;line-height:13px;color:#ffffff;transform:scaleX(1.0174);transform-origin:center top;-webkit-text-stroke:0.05px #fff;">1148.60</div>
<div class="t" style="left:349.98px;top:629.90px;font-size:13px;line-height:13px;color:#ffffff;transform:scaleX(1.0174);transform-origin:center top;-webkit-text-stroke:0.05px #fff;">1163.04</div>
<div class="t" style="left:434.46px;top:629.90px;font-size:13px;line-height:13px;color:#ffffff;transform:scaleX(1.0036);transform-origin:center top;-webkit-text-stroke:0.05px #fff;">35,251,700</div>
<div class="t" style="left:537.98px;top:629.90px;font-size:13px;line-height:13px;color:#ffffff;transform:scaleX(1.0174);transform-origin:center top;-webkit-text-stroke:0.05px #fff;">1163.04</div>
<div class="t" style="left:626.56px;top:629.90px;font-size:13px;line-height:13px;color:#ffffff;transform:scaleX(0.9653);transform-origin:center top;-webkit-text-stroke:0.05px #fff;">0.73%</div>
<div class="t" style="left:26.58px;top:649.90px;font-size:13px;line-height:13px;color:#ffffff;transform:scaleX(1.0819);transform-origin:center top;-webkit-text-stroke:0.05px #fff;">5/31/2016</div>
<div class="t" style="left:103.98px;top:649.90px;font-size:13px;line-height:13px;color:#ffffff;transform:scaleX(1.0174);transform-origin:center top;-webkit-text-stroke:0.05px #fff;">1150.60</div>
<div class="t" style="left:181.98px;top:649.90px;font-size:13px;line-height:13px;color:#ffffff;transform:scaleX(1.0174);transform-origin:center top;-webkit-text-stroke:0.05px #fff;">1158.97</div>
<div class="t" style="left:265.98px;top:649.90px;font-size:13px;line-height:13px;color:#ffffff;transform:scaleX(1.0174);transform-origin:center top;-webkit-text-stroke:0.05px #fff;">1150.34</div>
<div class="t" style="left:349.98px;top:649.90px;font-size:13px;line-height:13px;color:#ffffff;transform:scaleX(1.0174);transform-origin:center top;-webkit-text-stroke:0.05px #fff;">1154.79</div>
<div class="t" style="left:434.46px;top:649.90px;font-size:13px;line-height:13px;color:#ffffff;transform:scaleX(1.0036);transform-origin:center top;-webkit-text-stroke:0.05px #fff;">45,144,100</div>
<div class="t" style="left:537.98px;top:649.90px;font-size:13px;line-height:13px;color:#ffffff;transform:scaleX(1.0174);transform-origin:center top;-webkit-text-stroke:0.05px #fff;">1154.79</div>
<div class="t" style="left:626.56px;top:649.90px;font-size:13px;line-height:13px;color:#ffffff;transform:scaleX(0.9653);transform-origin:center top;-webkit-text-stroke:0.05px #fff;">0.37%</div>
<div class="t" style="left:26.58px;top:669.90px;font-size:13px;line-height:13px;color:#ffffff;transform:scaleX(1.0819);transform-origin:center top;-webkit-text-stroke:0.05px #fff;">5/27/2016</div>
<div class="t" style="left:103.98px;top:669.90px;font-size:13px;line-height:13px;color:#ffffff;transform:scaleX(1.0174);transform-origin:center top;-webkit-text-stroke:0.05px #fff;">1139.98</div>
<div class="t" style="left:181.98px;top:669.90px;font-size:13px;line-height:13px;color:#ffffff;transform:scaleX(1.0174);transform-origin:center top;-webkit-text-stroke:0.05px #fff;">1150.45</div>
<div class="t" style="left:265.98px;top:669.90px;font-size:13px;line-height:13px;color:#ffffff;transform:scaleX(1.0174);transform-origin:center top;-webkit-text-stroke:0.05px #fff;">1139.98</div>
<div class="t" style="left:349.98px;top:669.90px;font-size:13px;line-height:13px;color:#ffffff;transform:scaleX(1.0174);transform-origin:center top;-webkit-text-stroke:0.05px #fff;">1150.45</div>
<div class="t" style="left:434.46px;top:669.90px;font-size:13px;line-height:13px;color:#ffffff;transform:scaleX(1.0036);transform-origin:center top;-webkit-text-stroke:0.05px #fff;">30,791,500</div>
<div class="t" style="left:537.98px;top:669.90px;font-size:13px;line-height:13px;color:#ffffff;transform:scaleX(1.0174);transform-origin:center top;-webkit-text-stroke:0.05px #fff;">1150.45</div>
<div class="t" style="left:626.56px;top:669.90px;font-size:13px;line-height:13px;color:#ffffff;transform:scaleX(0.9653);transform-origin:center top;-webkit-text-stroke:0.05px #fff;">0.41%</div>
<div class="t" style="left:26.58px;top:689.90px;font-size:13px;line-height:13px;color:#ffffff;transform:scaleX(1.0819);transform-origin:center top;-webkit-text-stroke:0.05px #fff;">5/26/2016</div>
<div class="t" style="left:103.98px;top:689.90px;font-size:13px;line-height:13px;color:#ffffff;transform:scaleX(1.0174);transform-origin:center top;-webkit-text-stroke:0.05px #fff;">1141.10</div>
<div class="t" style="left:181.98px;top:689.90px;font-size:13px;line-height:13px;color:#ffffff;transform:scaleX(1.0174);transform-origin:center top;-webkit-text-stroke:0.05px #fff;">1143.19</div>
<div class="t" style="left:265.98px;top:689.90px;font-size:13px;line-height:13px;color:#ffffff;transform:scaleX(1.0174);transform-origin:center top;-webkit-text-stroke:0.05px #fff;">1137.59</div>
<div class="t" style="left:349.98px;top:689.90px;font-size:13px;line-height:13px;color:#ffffff;transform:scaleX(1.0174);transform-origin:center top;-webkit-text-stroke:0.05px #fff;">1139.75</div>
<div class="t" style="left:434.46px;top:689.90px;font-size:13px;line-height:13px;color:#ffffff;transform:scaleX(1.0036);transform-origin:center top;-webkit-text-stroke:0.05px #fff;">32,309,900</div>
<div class="t" style="left:537.98px;top:689.90px;font-size:13px;line-height:13px;color:#ffffff;transform:scaleX(1.0174);transform-origin:center top;-webkit-text-stroke:0.05px #fff;">1139.75</div>
<div class="t" style="left:624.40px;top:689.90px;font-size:13px;line-height:13px;color:#ffffff;transform:scaleX(0.9760);transform-origin:center top;-webkit-text-stroke:0.05px #fff;">-0.10%</div>
<div class="t" style="left:26.58px;top:709.90px;font-size:13px;line-height:13px;color:#ffffff;transform:scaleX(1.0819);transform-origin:center top;-webkit-text-stroke:0.05px #fff;">5/25/2016</div>
<div class="t" style="left:103.98px;top:709.90px;font-size:13px;line-height:13px;color:#ffffff;transform:scaleX(1.0174);transform-origin:center top;-webkit-text-stroke:0.05px #fff;">1136.37</div>
<div class="t" style="left:181.98px;top:709.90px;font-size:13px;line-height:13px;color:#ffffff;transform:scaleX(1.0174);transform-origin:center top;-webkit-text-stroke:0.05px #fff;">1142.85</div>
<div class="t" style="left:265.98px;top:709.90px;font-size:13px;line-height:13px;color:#ffffff;transform:scaleX(1.0174);transform-origin:center top;-webkit-text-stroke:0.05px #fff;">1136.37</div>
<div class="t" style="left:349.98px;top:709.90px;font-size:13px;line-height:13px;color:#ffffff;transform:scaleX(1.0174);transform-origin:center top;-webkit-text-stroke:0.05px #fff;">1141.02</div>
<div class="t" style="left:434.46px;top:709.90px;font-size:13px;line-height:13px;color:#ffffff;transform:scaleX(1.0036);transform-origin:center top;-webkit-text-stroke:0.05px #fff;">38,591,600</div>
<div class="t" style="left:537.98px;top:709.90px;font-size:13px;line-height:13px;color:#ffffff;transform:scaleX(1.0174);transform-origin:center top;-webkit-text-stroke:0.05px #fff;">1141.02</div>
<div class="t" style="left:626.56px;top:709.90px;font-size:13px;line-height:13px;color:#ffffff;transform:scaleX(0.9653);transform-origin:center top;-webkit-text-stroke:0.05px #fff;">0.41%</div>
<div class="t" style="left:26.58px;top:729.90px;font-size:13px;line-height:13px;color:#ffffff;transform:scaleX(1.0819);transform-origin:center top;-webkit-text-stroke:0.05px #fff;">5/24/2016</div>
<div class="t" style="left:103.98px;top:729.90px;font-size:13px;line-height:13px;color:#ffffff;transform:scaleX(1.0174);transform-origin:center top;-webkit-text-stroke:0.05px #fff;">1136.00</div>
<div class="t" style="left:181.98px;top:729.90px;font-size:13px;line-height:13px;color:#ffffff;transform:scaleX(1.0174);transform-origin:center top;-webkit-text-stroke:0.05px #fff;">1140.00</div>
<div class="t" style="left:265.98px;top:729.90px;font-size:13px;line-height:13px;color:#ffffff;transform:scaleX(1.0174);transform-origin:center top;-webkit-text-stroke:0.05px #fff;">1130.00</div>
<div class="t" style="left:349.98px;top:729.90px;font-size:13px;line-height:13px;color:#ffffff;transform:scaleX(1.0174);transform-origin:center top;-webkit-text-stroke:0.05px #fff;">1138.00</div>
<div class="t" style="left:434.46px;top:729.90px;font-size:13px;line-height:13px;color:#ffffff;transform:scaleX(1.0036);transform-origin:center top;-webkit-text-stroke:0.05px #fff;">33,000,000</div>
<div class="t" style="left:537.98px;top:729.90px;font-size:13px;line-height:13px;color:#ffffff;transform:scaleX(1.0174);transform-origin:center top;-webkit-text-stroke:0.05px #fff;">1138.00</div>
<div class="t" style="left:626.56px;top:729.90px;font-size:13px;line-height:13px;color:#ffffff;transform:scaleX(0.9653);transform-origin:center top;-webkit-text-stroke:0.05px #fff;">0.30%</div>
<div class="t" style="left:783.36px;top:188.90px;font-size:13px;line-height:13px;color:#000000;transform:scaleX(0.9919);transform-origin:right top;">-0.03</div>
<div class="t" style="left:776.12px;top:208.90px;font-size:13px;line-height:13px;color:#000000;transform:scaleX(0.9966);transform-origin:right top;">-0.025</div>
<div class="t" style="left:783.36px;top:228.90px;font-size:13px;line-height:13px;color:#000000;transform:scaleX(0.9919);transform-origin:right top;">-0.02</div>
<div class="t" style="left:776.12px;top:248.90px;font-size:13px;line-height:13px;color:#000000;transform:scaleX(0.9966);transform-origin:right top;">-0.015</div>
<div class="t" style="left:783.36px;top:268.90px;font-size:13px;line-height:13px;color:#000000;transform:scaleX(0.9919);transform-origin:right top;">-0.01</div>
<div class="t" style="left:776.12px;top:288.90px;font-size:13px;line-height:13px;color:#000000;transform:scaleX(0.9966);transform-origin:right top;">-0.005</div>
<div class="t" style="left:805.77px;top:308.90px;font-size:13px;line-height:13px;color:#000000;transform:scaleX(0.8708);transform-origin:right top;">0</div>
<div class="t" style="left:780.45px;top:328.90px;font-size:13px;line-height:13px;color:#000000;transform:scaleX(0.9872);transform-origin:right top;">0.005</div>
<div class="t" style="left:787.69px;top:348.90px;font-size:13px;line-height:13px;color:#000000;transform:scaleX(0.9790);transform-origin:right top;">0.01</div>
<div class="t" style="left:780.45px;top:368.90px;font-size:13px;line-height:13px;color:#000000;transform:scaleX(0.9872);transform-origin:right top;">0.015</div>
<div class="t" style="left:787.69px;top:388.90px;font-size:13px;line-height:13px;color:#000000;transform:scaleX(0.9790);transform-origin:right top;">0.02</div>
<div class="t" style="left:780.45px;top:408.90px;font-size:13px;line-height:13px;color:#000000;transform:scaleX(0.9872);transform-origin:right top;">0.025</div>
<div class="t" style="left:787.69px;top:428.90px;font-size:13px;line-height:13px;color:#000000;transform:scaleX(0.9790);transform-origin:right top;">0.03</div>
<div style="position:absolute;left:880px;top:225px;width:46px;height:198px;background:#efeef7;"></div>
<div style="position:absolute;left:928px;top:226px;width:72px;height:197px;background:#eef0fa;"></div>
<div style="position:absolute;left:927px;top:205px;width:73px;height:19px;background:#fdeeee;"></div>
<div style="position:absolute;left:880px;top:244px;width:46px;height:1px;background:#cdcddc;"></div>
<div style="position:absolute;left:928px;top:244px;width:72px;height:1px;background:#cdcddc;"></div>
<div style="position:absolute;left:880px;top:264px;width:46px;height:1px;background:#cdcddc;"></div>
<div style="position:absolute;left:928px;top:264px;width:72px;height:1px;background:#cdcddc;"></div>
<div style="position:absolute;left:880px;top:284px;width:46px;height:1px;background:#cdcddc;"></div>
<div style="position:absolute;left:928px;top:284px;width:72px;height:1px;background:#cdcddc;"></div>
<div style="position:absolute;left:880px;top:304px;width:46px;height:1px;background:#cdcddc;"></div>
<div style="position:absolute;left:928px;top:304px;width:72px;height:1px;background:#cdcddc;"></div>
<div style="position:absolute;left:880px;top:324px;width:46px;height:1px;background:#cdcddc;"></div>
<div style="position:absolute;left:928px;top:324px;width:72px;height:1px;background:#cdcddc;"></div>
<div style="position:absolute;left:880px;top:344px;width:46px;height:1px;background:#cdcddc;"></div>
<div style="position:absolute;left:928px;top:344px;width:72px;height:1px;background:#cdcddc;"></div>
<div style="position:absolute;left:880px;top:364px;width:46px;height:1px;background:#cdcddc;"></div>
<div style="position:absolute;left:928px;top:364px;width:72px;height:1px;background:#cdcddc;"></div>
<div style="position:absolute;left:880px;top:384px;width:46px;height:1px;background:#cdcddc;"></div>
<div style="position:absolute;left:928px;top:384px;width:72px;height:1px;background:#cdcddc;"></div>
<div style="position:absolute;left:880px;top:404px;width:46px;height:1px;background:#cdcddc;"></div>
<div style="position:absolute;left:928px;top:404px;width:72px;height:1px;background:#cdcddc;"></div>
<div class="t" style="left:893.10px;top:208.80px;font-size:13px;font-style:italic;line-height:13px;color:#000;transform:scaleX(1.0374);transform-origin:center top;">Bin</div>
<div class="t" style="left:932.29px;top:208.80px;font-size:13px;font-style:italic;line-height:13px;color:#000;">Frequency</div>
<div class="t" style="left:893.36px;top:228.80px;font-size:13px;line-height:13px;color:#000;transform:scaleX(0.9919);transform-origin:right top;">-0.03</div>
<div class="t" style="left:975.30px;top:228.80px;font-size:13px;line-height:13px;color:#000;transform:scaleX(0.9676);transform-origin:right top;">107</div>
<div class="t" style="left:886.12px;top:248.80px;font-size:13px;line-height:13px;color:#000;transform:scaleX(0.9966);transform-origin:right top;">-0.025</div>
<div class="t" style="left:982.53px;top:248.80px;font-size:13px;line-height:13px;color:#000;transform:scaleX(0.9434);transform-origin:right top;">93</div>
<div class="t" style="left:893.36px;top:268.80px;font-size:13px;line-height:13px;color:#000;transform:scaleX(0.9919);transform-origin:right top;">-0.02</div>
<div class="t" style="left:975.30px;top:268.80px;font-size:13px;line-height:13px;color:#000;transform:scaleX(0.9676);transform-origin:right top;">140</div>
<div class="t" style="left:886.12px;top:288.80px;font-size:13px;line-height:13px;color:#000;transform:scaleX(0.9966);transform-origin:right top;">-0.015</div>
<div class="t" style="left:975.30px;top:288.80px;font-size:13px;line-height:13px;color:#000;transform:scaleX(0.9676);transform-origin:right top;">308</div>
<div class="t" style="left:893.36px;top:308.80px;font-size:13px;line-height:13px;color:#000;transform:scaleX(0.9919);transform-origin:right top;">-0.01</div>
<div class="t" style="left:975.30px;top:308.80px;font-size:13px;line-height:13px;color:#000;transform:scaleX(0.9676);transform-origin:right top;">419</div>
<div class="t" style="left:886.12px;top:328.80px;font-size:13px;line-height:13px;color:#000;transform:scaleX(0.9966);transform-origin:right top;">-0.005</div>
<div class="t" style="left:975.30px;top:328.80px;font-size:13px;line-height:13px;color:#000;transform:scaleX(0.9676);transform-origin:right top;">775</div>
<div class="t" style="left:915.77px;top:348.80px;font-size:13px;line-height:13px;color:#000;transform:scaleX(0.8708);transform-origin:right top;">0</div>
<div class="t" style="left:968.08px;top:348.80px;font-size:13px;line-height:13px;color:#000;transform:scaleX(0.9802);transform-origin:right top;">1427</div>
<div class="t" style="left:890.45px;top:368.80px;font-size:13px;line-height:13px;color:#000;transform:scaleX(0.9872);transform-origin:right top;">0.005</div>
<div class="t" style="left:968.08px;top:368.80px;font-size:13px;line-height:13px;color:#000;transform:scaleX(0.9802);transform-origin:right top;">1838</div>
<div class="t" style="left:897.69px;top:388.80px;font-size:13px;line-height:13px;color:#000;transform:scaleX(0.9790);transform-origin:right top;">0.01</div>
<div class="t" style="left:968.08px;top:388.80px;font-size:13px;line-height:13px;color:#000;transform:scaleX(0.9802);transform-origin:right top;">1088</div>
<div class="t" style="left:890.45px;top:408.80px;font-size:13px;line-height:13px;color:#000;transform:scaleX(0.9872);transform-origin:right top;">0.015</div>
<div class="t" style="left:975.30px;top:408.80px;font-size:13px;line-height:13px;color:#000;transform:scaleX(0.9676);transform-origin:right top;">519</div>
<div style="position:absolute;left:879px;top:203px;width:44px;height:2px;background:#000;"></div>
<div style="position:absolute;left:925px;top:203px;width:77px;height:2px;background:#e8504f;"></div>
<div style="position:absolute;left:925px;top:203px;width:2px;height:22px;background:#e8504f;"></div>
<div style="position:absolute;left:1000px;top:203px;width:2px;height:22px;background:#e8504f;"></div>
<div style="position:absolute;left:927px;top:224px;width:75px;height:2px;background:#e8504f;"></div>
<div style="position:absolute;left:1000px;top:226px;width:2px;height:197px;background:#5b87e0;"></div>
<div style="position:absolute;left:878px;top:223px;width:50px;height:2px;background:#8a5cc8;"></div>
<div style="position:absolute;left:878px;top:223px;width:2px;height:200px;background:#8a5cc8;"></div>
<div style="position:absolute;left:926px;top:223px;width:2px;height:200px;background:#8a5cc8;"></div>
<div style="position:absolute;left:923px;top:201px;width:7px;height:7px;background:#fff;"></div>
<div style="position:absolute;left:924px;top:202px;width:5px;height:5px;background:#e8504f;"></div>
<div style="position:absolute;left:997px;top:201px;width:7px;height:7px;background:#fff;"></div>
<div style="position:absolute;left:998px;top:202px;width:5px;height:5px;background:#e8504f;"></div>
<div style="position:absolute;left:997px;top:221px;width:7px;height:7px;background:#fff;"></div>
<div style="position:absolute;left:998px;top:222px;width:5px;height:5px;background:#e8504f;"></div>
<div style="position:absolute;left:876px;top:221px;width:7px;height:7px;background:#fff;"></div>
<div style="position:absolute;left:877px;top:222px;width:5px;height:5px;background:#8a5cc8;"></div>
<div style="position:absolute;left:923px;top:221px;width:7px;height:7px;background:#fff;"></div>
<div style="position:absolute;left:924px;top:222px;width:5px;height:5px;background:#8a5cc8;"></div>
<svg style="position:absolute;left:0px;top:0px;" width="1145" height="732" viewBox="0 0 1145 732" shape-rendering="crispEdges"><rect x="606" y="422" width="486" height="294" fill="#fff"/><rect x="606.5" y="422.5" width="485" height="293" fill="none" stroke="#c0c0c0" stroke-dasharray="1 1"/><rect x="609.5" y="425.5" width="479" height="287" fill="none" stroke="#d9d9d9"/><rect x="653" y="473" width="420" height="1" fill="#d9d9d9"/><rect x="653" y="492" width="420" height="1" fill="#d9d9d9"/><rect x="653" y="511" width="420" height="1" fill="#d9d9d9"/><rect x="653" y="530" width="420" height="1" fill="#d9d9d9"/><rect x="653" y="549" width="420" height="1" fill="#d9d9d9"/><rect x="653" y="568" width="420" height="1" fill="#d9d9d9"/><rect x="653" y="587" width="420" height="1" fill="#d9d9d9"/><rect x="653" y="606" width="420" height="1" fill="#d9d9d9"/><rect x="653" y="625" width="420" height="1" fill="#d9d9d9"/><rect x="653" y="644" width="420" height="1" fill="#d9d9d9"/><rect x="653" y="663" width="420" height="1" fill="#d9d9d9"/><rect x="662.33" y="654.00" width="9.8" height="9.20" fill="#5b9bd5" shape-rendering="geometricPrecision"/><rect x="692.39" y="655.10" width="9.8" height="8.10" fill="#5b9bd5" shape-rendering="geometricPrecision"/><rect x="722.45" y="650.90" width="9.8" height="12.30" fill="#5b9bd5" shape-rendering="geometricPrecision"/><rect x="752.51" y="635.00" width="9.8" height="28.20" fill="#5b9bd5" shape-rendering="geometricPrecision"/><rect x="782.57" y="624.00" width="9.8" height="39.20" fill="#5b9bd5" shape-rendering="geometricPrecision"/><rect x="812.63" y="590.00" width="9.8" height="73.20" fill="#5b9bd5" shape-rendering="geometricPrecision"/><rect x="842.69" y="527.80" width="9.8" height="135.40" fill="#5b9bd5" shape-rendering="geometricPrecision"/><rect x="872.75" y="489.00" width="9.8" height="174.20" fill="#5b9bd5" shape-rendering="geometricPrecision"/><rect x="902.81" y="560.80" width="9.8" height="102.40" fill="#5b9bd5" shape-rendering="geometricPrecision"/><rect x="932.87" y="615.00" width="9.8" height="48.20" fill="#5b9bd5" shape-rendering="geometricPrecision"/><rect x="962.93" y="641.00" width="9.8" height="22.20" fill="#5b9bd5" shape-rendering="geometricPrecision"/><rect x="992.99" y="651.20" width="9.8" height="12.00" fill="#5b9bd5" shape-rendering="geometricPrecision"/><rect x="1023.05" y="657.00" width="9.8" height="6.20" fill="#5b9bd5" shape-rendering="geometricPrecision"/><rect x="1053.11" y="654.00" width="9.8" height="9.20" fill="#5b9bd5" shape-rendering="geometricPrecision"/><rect x="604.5" y="420.5" width="7" height="7" rx="1.2" fill="#fff" stroke="#a8a8a8" stroke-width="1" stroke-dasharray="1 1"/><rect x="604.5" y="565.5" width="7" height="7" rx="1.2" fill="#fff" stroke="#a8a8a8" stroke-width="1" stroke-dasharray="1 1"/><rect x="604.5" y="710.5" width="7" height="7" rx="1.2" fill="#fff" stroke="#a8a8a8" stroke-width="1" stroke-dasharray="1 1"/><rect x="845.5" y="420.5" width="7" height="7" rx="1.2" fill="#fff" stroke="#a8a8a8" stroke-width="1" stroke-dasharray="1 1"/><rect x="845.5" y="710.5" width="7" height="7" rx="1.2" fill="#fff" stroke="#a8a8a8" stroke-width="1" stroke-dasharray="1 1"/><rect x="1086.5" y="420.5" width="7" height="7" rx="1.2" fill="#fff" stroke="#a8a8a8" stroke-width="1" stroke-dasharray="1 1"/><rect x="1086.5" y="565.5" width="7" height="7" rx="1.2" fill="#fff" stroke="#a8a8a8" stroke-width="1" stroke-dasharray="1 1"/><rect x="1086.5" y="710.5" width="7" height="7" rx="1.2" fill="#fff" stroke="#a8a8a8" stroke-width="1" stroke-dasharray="1 1"/></svg>
<div class="t" style="left:808.24px;top:438.61px;font-size:17px;line-height:17px;color:#595959;transform:scaleX(0.9897);transform-origin:center top;">Frequency</div>
<div class="t" style="left:614.91px;top:468.17px;font-size:11.5px;line-height:11.5px;color:#595959;transform:scaleX(0.9182);transform-origin:right top;">2000</div>
<div class="t" style="left:614.91px;top:487.12px;font-size:11.5px;line-height:11.5px;color:#595959;transform:scaleX(0.9182);transform-origin:right top;">1800</div>
<div class="t" style="left:614.91px;top:506.07px;font-size:11.5px;line-height:11.5px;color:#595959;transform:scaleX(0.9182);transform-origin:right top;">1600</div>
<div class="t" style="left:614.91px;top:525.02px;font-size:11.5px;line-height:11.5px;color:#595959;transform:scaleX(0.9182);transform-origin:right top;">1400</div>
<div class="t" style="left:614.91px;top:543.97px;font-size:11.5px;line-height:11.5px;color:#595959;transform:scaleX(0.9182);transform-origin:right top;">1200</div>
<div class="t" style="left:614.91px;top:562.92px;font-size:11.5px;line-height:11.5px;color:#595959;transform:scaleX(0.9182);transform-origin:right top;">1000</div>
<div class="t" style="left:621.31px;top:581.87px;font-size:11.5px;line-height:11.5px;color:#595959;transform:scaleX(0.9121);transform-origin:right top;">800</div>
<div class="t" style="left:621.31px;top:600.82px;font-size:11.5px;line-height:11.5px;color:#595959;transform:scaleX(0.9121);transform-origin:right top;">600</div>
<div class="t" style="left:621.31px;top:619.77px;font-size:11.5px;line-height:11.5px;color:#595959;transform:scaleX(0.9121);transform-origin:right top;">400</div>
<div class="t" style="left:621.31px;top:638.72px;font-size:11.5px;line-height:11.5px;color:#595959;transform:scaleX(0.9121);transform-origin:right top;">200</div>
<div class="t" style="left:634.09px;top:657.67px;font-size:11.5px;line-height:11.5px;color:#595959;transform:scaleX(0.8585);transform-origin:right top;">0</div>
<div class="t" style="left:462.53px;top:672.50px;width:200px;text-align:right;font-size:11.8px;line-height:12px;color:#595959;transform-origin:right top;transform:rotate(-45deg) scaleX(0.92)">-0.03</div>
<div class="t" style="left:492.59px;top:672.50px;width:200px;text-align:right;font-size:11.8px;line-height:12px;color:#595959;transform-origin:right top;transform:rotate(-45deg) scaleX(0.92)">-0.025</div>
<div class="t" style="left:522.65px;top:672.50px;width:200px;text-align:right;font-size:11.8px;line-height:12px;color:#595959;transform-origin:right top;transform:rotate(-45deg) scaleX(0.92)">-0.02</div>
<div class="t" style="left:552.71px;top:672.50px;width:200px;text-align:right;font-size:11.8px;line-height:12px;color:#595959;transform-origin:right top;transform:rotate(-45deg) scaleX(0.92)">-0.015</div>
<div class="t" style="left:582.77px;top:672.50px;width:200px;text-align:right;font-size:11.8px;line-height:12px;color:#595959;transform-origin:right top;transform:rotate(-45deg) scaleX(0.92)">-0.01</div>
<div class="t" style="left:612.83px;top:672.50px;width:200px;text-align:right;font-size:11.8px;line-height:12px;color:#595959;transform-origin:right top;transform:rotate(-45deg) scaleX(0.92)">-0.005</div>
<div class="t" style="left:642.89px;top:672.50px;width:200px;text-align:right;font-size:11.8px;line-height:12px;color:#595959;transform-origin:right top;transform:rotate(-45deg) scaleX(0.92)">0</div>
<div class="t" style="left:672.95px;top:672.50px;width:200px;text-align:right;font-size:11.8px;line-height:12px;color:#595959;transform-origin:right top;transform:rotate(-45deg) scaleX(0.92)">0.005</div>
<div class="t" style="left:703.01px;top:672.50px;width:200px;text-align:right;font-size:11.8px;line-height:12px;color:#595959;transform-origin:right top;transform:rotate(-45deg) scaleX(0.92)">0.01</div>
<div class="t" style="left:733.07px;top:672.50px;width:200px;text-align:right;font-size:11.8px;line-height:12px;color:#595959;transform-origin:right top;transform:rotate(-45deg) scaleX(0.92)">0.015</div>
<div class="t" style="left:763.13px;top:672.50px;width:200px;text-align:right;font-size:11.8px;line-height:12px;color:#595959;transform-origin:right top;transform:rotate(-45deg) scaleX(0.92)">0.02</div>
<div class="t" style="left:793.19px;top:672.50px;width:200px;text-align:right;font-size:11.8px;line-height:12px;color:#595959;transform-origin:right top;transform:rotate(-45deg) scaleX(0.92)">0.025</div>
<div class="t" style="left:823.25px;top:672.50px;width:200px;text-align:right;font-size:11.8px;line-height:12px;color:#595959;transform-origin:right top;transform:rotate(-45deg) scaleX(0.92)">0.03</div>
<div class="t" style="left:853.31px;top:672.50px;width:200px;text-align:right;font-size:11.8px;line-height:12px;color:#595959;transform-origin:right top;transform:rotate(-45deg) scaleX(0.92)">More</div>
<div style="position:absolute;left:603px;top:53px;width:177px;height:243px;background:rgba(0,0,0,0.07);"></div>
<div style="position:absolute;left:601px;top:51px;width:176px;height:242px;border:1px solid #c6c6c6;background:#fff"></div>
<div style="position:absolute;left:602px;top:53px;width:176px;height:23px;background:#eeeeee;"></div>
<div class="t" style="left:611.00px;top:59.42px;font-size:12.5px;font-weight:bold;line-height:12.5px;color:#6a6a6a;transform:scaleX(0.9367);transform-origin:left top;-webkit-text-stroke:0;">2-D Column</div>
<div style="position:absolute;left:603px;top:76px;width:56px;height:56px;background:#d3efdf;"></div>
<div style="position:absolute;left:602px;top:132px;width:176px;height:22px;background:#eeeeee;"></div>
<div class="t" style="left:611.50px;top:137.92px;font-size:12.5px;font-weight:bold;line-height:12.5px;color:#6a6a6a;transform:scaleX(0.9367);transform-origin:left top;-webkit-text-stroke:0;">3-D Column</div>
<div style="position:absolute;left:602px;top:267px;width:176px;height:1px;background:#e1e1e1;"></div>
<div class="t" style="left:634.40px;top:274.72px;font-size:12.5px;line-height:12.5px;color:#444;transform:scaleX(0.9464);transform-origin:left top;">More Column Charts...</div>
<svg style="position:absolute;left:0px;top:0px;" width="1145" height="732" viewBox="0 0 1145 732" shape-rendering="crispEdges"><rect x="611" y="85" width="1" height="37" fill="#8a8a8a"/><rect x="611" y="121" width="40" height="1" fill="#8a8a8a"/><rect x="615.5" y="101.5" width="7" height="19.5" fill="#fff" stroke="#8a8a8a"/><rect x="622.5" y="91.5" width="7" height="29.5" fill="#d4d4d4" stroke="#8a8a8a"/><rect x="633.5" y="94.5" width="7" height="26.5" fill="#fff" stroke="#8a8a8a"/><rect x="640.5" y="101.5" width="7" height="19.5" fill="#d4d4d4" stroke="#8a8a8a"/><rect x="667" y="85" width="1" height="37" fill="#8a8a8a"/><rect x="667" y="121" width="40" height="1" fill="#8a8a8a"/><rect x="675.0" y="93.5" width="9.5" height="17" fill="#d4d4d4" stroke="#8a8a8a"/><rect x="675.0" y="110.5" width="9.5" height="10.5" fill="#fff" stroke="#8a8a8a"/><rect x="692.0" y="87.5" width="9.5" height="17.5" fill="#d4d4d4" stroke="#8a8a8a"/><rect x="692.0" y="105.0" width="9.5" height="16.0" fill="#fff" stroke="#8a8a8a"/><rect x="723.5" y="85" width="1" height="37" fill="#8a8a8a"/><rect x="723.5" y="121" width="40" height="1" fill="#8a8a8a"/><rect x="731.0" y="87.5" width="9.5" height="23" fill="#d4d4d4" stroke="#8a8a8a"/><rect x="731.0" y="110.5" width="9.5" height="10.5" fill="#fff" stroke="#8a8a8a"/><rect x="748.0" y="87.5" width="9.5" height="17.5" fill="#d4d4d4" stroke="#8a8a8a"/><rect x="748.0" y="105.0" width="9.5" height="16.0" fill="#fff" stroke="#8a8a8a"/><g fill="#fff" stroke="#8a8a8a" stroke-width="1" shape-rendering="geometricPrecision"><path d="M615.5 164 V191 M611 195 L615.5 190.5"/><path d="M623.5 199.5 V172.5 L626 170 H630 V197 L627.5 199.5 z" fill="#d9d9d9"/><path d="M623.5 172.5 H627.5 L630 170 M627.5 172.5 V199.5"/><path d="M617.5 200.5 V182.5 L619.5 180.5 H623.5 V198.5 L621.5 200.5 z"/><path d="M617.5 182.5 H621.5 L623.5 180.5 M621.5 182.5 V200.5"/><path d="M615.5 219.5 V247 M611 251 L615.5 246.5"/><path d="M621.5 253 V224 L624 221.5 H630.5 V250.5 L628 253 z" fill="#d9d9d9"/><path d="M621.5 224 H628 L630.5 221.5 M628 224 V253"/><path d="M614.5 257 V237.5 L616.5 235.5 H621.5 V255 L619.5 257 z"/><path d="M614.5 237.5 H619.5 L621.5 235.5 M619.5 237.5 V257"/></g><g fill="none" stroke="#777" stroke-width="1"><path d="M607.5 273 V287.5 H623"/><path d="M609.5 287 V281.5 H611.5 V287 M612.5 287 V276.5 H614.5 V287 M615.5 287 V283 H617.5 V287 M618.5 287 V275 H620.5 V287"/></g><rect x="634.5" y="286.5" width="8" height="1" fill="#444"/></svg>
<div style="position:absolute;left:633px;top:137px;width:214px;height:143px;background:rgba(0,0,0,0.06);"></div>
<div style="position:absolute;left:631px;top:135px;width:213px;height:142px;border:1px solid #bebebe;background:#fff"></div>
<div class="t" style="left:643.40px;top:143.24px;font-size:12px;font-weight:bold;line-height:12px;color:#555;transform:scaleX(0.9415);transform-origin:left top;-webkit-text-stroke:0;">Clustered Column</div>
<div class="t" style="left:643.40px;top:164.54px;font-size:12px;line-height:12px;color:#444;transform:scaleX(0.9753);transform-origin:left top;">Use this chart type to:</div>
<div class="t" style="left:643.40px;top:179.24px;font-size:12px;line-height:12px;color:#444;transform:scaleX(0.9631);transform-origin:left top;">• Compare values across a few</div>
<div class="t" style="left:643.40px;top:194.04px;font-size:12px;line-height:12px;color:#444;transform:scaleX(1.0136);transform-origin:left top;">categories.</div>
<div class="t" style="left:643.40px;top:224.24px;font-size:12px;line-height:12px;color:#444;transform:scaleX(0.9768);transform-origin:left top;">Use it when:</div>
<div class="t" style="left:643.40px;top:239.04px;font-size:12px;line-height:12px;color:#444;transform:scaleX(0.9883);transform-origin:left top;">• The order of categories is not</div>
<div class="t" style="left:643.40px;top:253.84px;font-size:12px;line-height:12px;color:#444;transform:scaleX(1.0495);transform-origin:left top;">important.</div>
<svg style="position:absolute;left:0px;top:0px;" width="1145" height="732" viewBox="0 0 1145 732" shape-rendering="crispEdges"><path d="M631.8 115.8 V131.6 L635.6 128 L638.6 134 L641 132.8 L638.3 127 H643 z" fill="#fff" stroke="#000" stroke-width="1.1" stroke-linejoin="round" shape-rendering="geometricPrecision"/></svg>
</body></html>
